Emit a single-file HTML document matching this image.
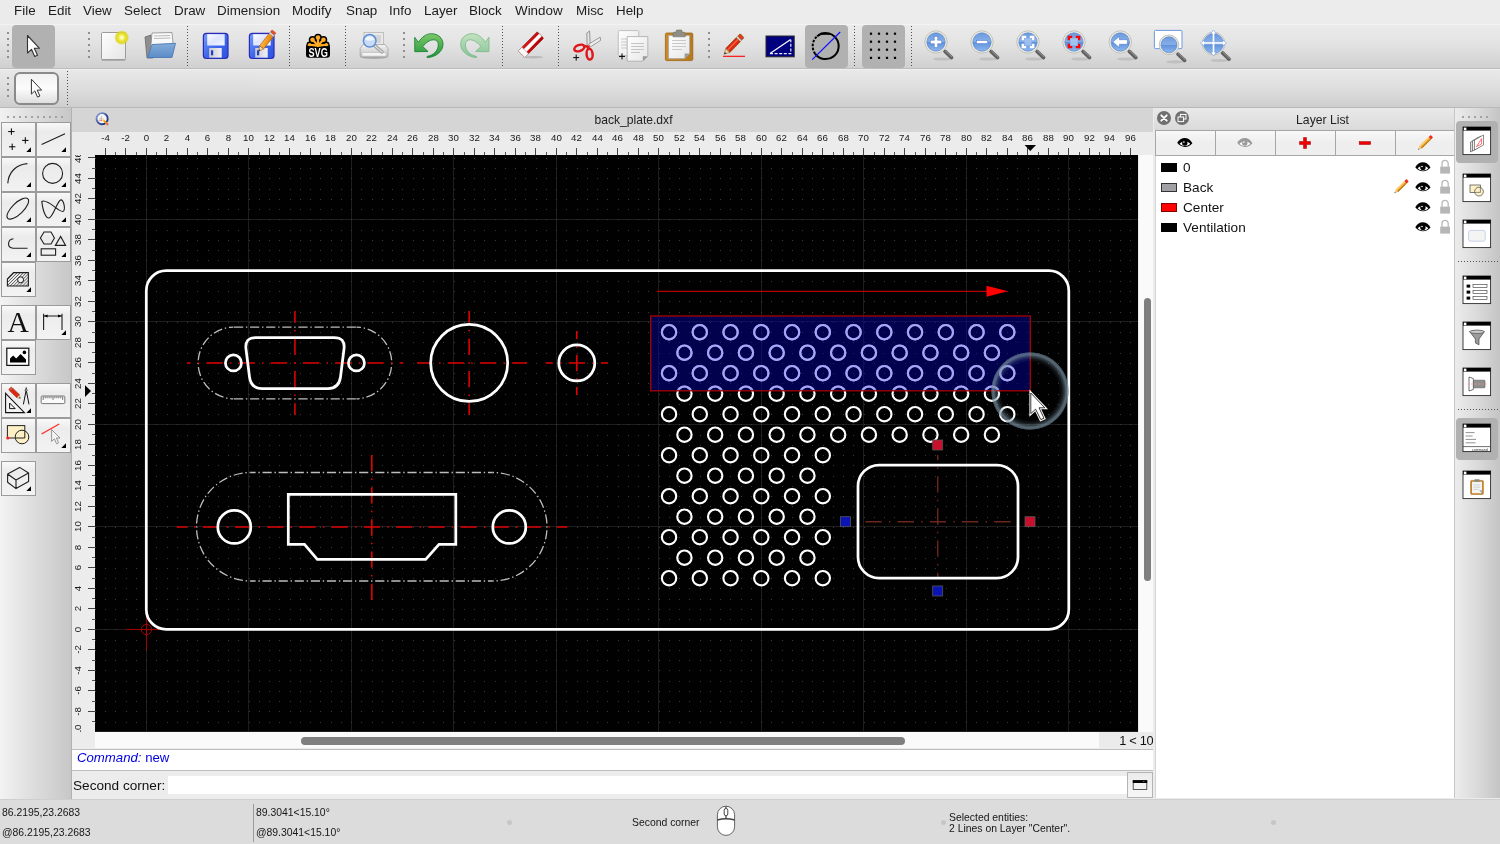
<!DOCTYPE html>
<html lang="en"><head><meta charset="utf-8"><title>back_plate.dxf - QCAD</title>
<style>
*{box-sizing:border-box;margin:0;padding:0}
html,body{width:1500px;height:844px;overflow:hidden;background:#dcdcdc}
body{font-family:"Liberation Sans",sans-serif;color:#1a1a1a}
#app{will-change:transform;opacity:0.9999;position:relative;width:1500px;height:844px;overflow:hidden;background:#ececec}
.abs{position:absolute}
#menubar{position:absolute;left:0;top:0;width:1500px;height:24px;background:#ececec}
.mi{position:absolute;top:3px;font-size:13.4px;line-height:16px;color:#1c1c1c;white-space:nowrap}
#tb1{position:absolute;left:0;top:24px;width:1500px;height:45px;background:linear-gradient(#f7f7f7 0,#ebebeb 1.5px,#e3e3e3 45%,#d0d0d0);border-bottom:1px solid #bdbdbd}
#tb2{position:absolute;left:0;top:69px;width:1500px;height:39px;background:linear-gradient(#f4f4f4 0,#e9e9e9 1.5px,#dedede 50%,#cecece);border-bottom:1px solid #b8b8b8}
.tbsel{position:absolute;background:#b1b1b1;border-radius:4px}
.vdots{position:absolute;width:1px;background:repeating-linear-gradient(180deg,#505050 0,#505050 1px,transparent 1px,transparent 3px)}
.grip{position:absolute;width:2px;background:repeating-linear-gradient(180deg,#8f8f8f 0,#8f8f8f 2px,transparent 2px,transparent 6px)}
.ico{position:absolute;width:36px;height:36px}
.ico svg{display:block}
#leftpanel{position:absolute;left:0;top:108px;width:71.5px;height:691px;background:linear-gradient(90deg,#f3f3f3,#dedede 45%,#c7c7c7);border-right:1.5px solid #b2b2b2}
.lt{position:absolute;width:35px;height:35px;background:linear-gradient(#f9f9f9,#ececec 28%,#f0f0f0 70%,#f3f3f3);border:1px solid #9b9b9b}
.lt svg{position:absolute;left:0;top:0}
#tabbar{position:absolute;left:72px;top:108px;width:1082px;height:24px;background:#d5d5d5}
#tabtitle{position:absolute;left:0;width:1123px;top:5px;text-align:center;font-size:12.1px;line-height:15px;color:#222}
#hruler{position:absolute;left:72px;top:132px;width:1081px;height:23px;background:#ececec}
#vruler{position:absolute;left:72px;top:155px;width:23px;height:593px;background:#ececec}
#canvasbg{position:absolute;left:95px;top:155px;width:1043px;height:577px;background:#000}
#cad{position:absolute;left:0;top:0;pointer-events:none}
#hscroll{position:absolute;left:95px;top:732px;width:1004px;height:16px;background:#fafafa}
#hthumb{position:absolute;left:301px;top:737.2px;width:604px;height:7.6px;border-radius:4px;background:#7f7f7f}
#vscroll{position:absolute;left:1138px;top:155px;width:15px;height:577px;background:#fafafa;border-left:1px solid #e8e8e8}
#vthumb{position:absolute;left:1144px;top:298px;width:7px;height:283px;border-radius:4px;background:#7f7f7f}
#zoomlbl{position:absolute;left:1099px;top:732px;width:54.4px;height:16px;background:#ebebeb;font-size:12.8px;letter-spacing:-0.3px;line-height:18px;text-align:right;color:#111;white-space:nowrap;overflow:hidden}
#cmdhist{position:absolute;left:72px;top:749px;width:1081px;height:22px;background:#fff;border-top:1px solid #bdbdbd;border-bottom:1px solid #bdbdbd}
#cmdhist span{position:absolute;left:5px;top:0;font-size:13.2px;line-height:16px;color:#0000e0}
#cmdrow{position:absolute;left:72px;top:771px;width:1081px;height:27.5px;background:#ececec}
#cmdlabel{position:absolute;left:1px;top:7px;font-size:13.6px;line-height:16px;color:#111}
#cmdinput{position:absolute;left:96px;top:5px;width:958.5px;height:18.4px;background:#fff}
#cmdbtn{position:absolute;left:1055px;top:1px;width:26px;height:26px;background:linear-gradient(#ececec,#f6f6f6);border:1px solid #b4b4b4}
#statusbar{position:absolute;left:0;top:798.5px;width:1500px;height:45.5px;background:#dcdcdc;border-top:1px solid #cfcfcf}
.st{position:absolute;font-size:10.4px;line-height:12px;color:#161616;white-space:nowrap;margin-top:-0.5px}
.sdot{position:absolute;width:5px;height:5px;border-radius:3px;background:#c6c6c6}
#rightdock{position:absolute;left:1153px;top:108px;width:301px;height:690px;background:#ececec}
#lltitle{position:absolute;left:1154px;top:108px;width:301px;height:22px;background:linear-gradient(#e9e9e9,#dadada)}
#lltitle span{position:absolute;left:0;width:337px;top:3.5px;text-align:center;font-size:12.2px;line-height:16px;color:#222}
.llbtn{position:absolute;top:130px;height:26px;width:61px;background:linear-gradient(#f8f8f8,#eeeeee 50%,#efefef);border:1px solid #a6a6a6}
#llbody{position:absolute;left:1155px;top:156px;width:300px;height:642px;background:#fff;border-left:1px solid #d4d4d4}
.lrow{position:absolute;left:0;width:296px;height:20px}
.lsw{position:absolute;left:5px;top:7px;width:16px;height:9px}
.lname{position:absolute;left:27px;top:2.8px;font-size:13.6px;line-height:18px;color:#111}
#rtool{position:absolute;left:1454px;top:108px;width:46px;height:690px;background:linear-gradient(90deg,#ececec,#dadada 50%,#c4c4c4);border-left:1px solid #c6c6c6}
.rsel{position:absolute;width:42.2px;height:42.5px;background:#b1b1b1;border-radius:4px}
.grip-h{position:absolute;height:2px;background:repeating-linear-gradient(90deg,#a2a2a2 0,#a2a2a2 2px,transparent 2px,transparent 6px)}
.wico{position:absolute;left:9.5px;width:28px;height:28px;background:#fff;border:1px solid #333}
.wico:before{content:"";position:absolute;left:0;top:0;width:26px;height:3.5px;background:#000}
.wico:after{content:"";position:absolute;left:0.5px;top:0.3px;width:3px;height:3px;background:#fff}
.hdots{position:absolute;height:1px;background:repeating-linear-gradient(90deg,#505050 0,#505050 1px,transparent 1px,transparent 3px)}
.ov{position:absolute;left:0;top:0;pointer-events:none;z-index:5}

</style></head>
<body>
<div id="app">
<div id="menubar"><span class="mi" style="left:14px">File</span><span class="mi" style="left:48px">Edit</span><span class="mi" style="left:83px">View</span><span class="mi" style="left:124px">Select</span><span class="mi" style="left:174px">Draw</span><span class="mi" style="left:217px">Dimension</span><span class="mi" style="left:292px">Modify</span><span class="mi" style="left:346px">Snap</span><span class="mi" style="left:389px">Info</span><span class="mi" style="left:424px">Layer</span><span class="mi" style="left:469px">Block</span><span class="mi" style="left:515px">Window</span><span class="mi" style="left:576px">Misc</span><span class="mi" style="left:616px">Help</span></div>
<div id="tb1">
<div class="grip" style="left:7px;top:8px;height:26px"></div>
<div class="tbsel" style="left:12px;top:1px;width:43px;height:43px"></div>
<div class="grip" style="left:88px;top:8px;height:26px"></div>
<div class="vdots" style="left:187px;top:2px;height:40px"></div>
<div class="vdots" style="left:289px;top:2px;height:40px"></div>
<div class="vdots" style="left:345px;top:2px;height:40px"></div>
<div class="grip" style="left:403px;top:8px;height:26px"></div>
<div class="vdots" style="left:502px;top:2px;height:40px"></div>
<div class="vdots" style="left:558px;top:2px;height:40px"></div>
<div class="grip" style="left:708px;top:8px;height:26px"></div>
<div class="tbsel" style="left:805px;top:1px;width:43px;height:43px"></div>
<div class="vdots" style="left:854px;top:2px;height:40px"></div>
<div class="tbsel" style="left:862px;top:1px;width:43px;height:43px"></div>
<div class="vdots" style="left:911px;top:2px;height:40px"></div>
</div>
<div id="tb2">
<div class="grip" style="left:7px;top:8px;height:22px"></div>
<div class="abs" style="left:14px;top:3px;width:45px;height:33.4px;border:2px solid #8a8a8a;border-radius:6px;background:linear-gradient(#f2f2f2,#fdfdfd 50%,#e0e0e0)"></div>
<div class="vdots" style="left:67px;top:2px;height:34px"></div>
</div>
<div id="leftpanel"></div>
<div class="grip-h" style="left:7px;top:116px;width:56px"></div>
<div class="lt" style="left:1px;top:122.0px"></div>
<div class="lt" style="left:36px;top:122.0px"></div>
<div class="lt" style="left:1px;top:157.0px"></div>
<div class="lt" style="left:36px;top:157.0px"></div>
<div class="lt" style="left:1px;top:192.0px"></div>
<div class="lt" style="left:36px;top:192.0px"></div>
<div class="lt" style="left:1px;top:227.0px"></div>
<div class="lt" style="left:36px;top:227.0px"></div>
<div class="lt" style="left:1px;top:262.0px"></div>
<div class="lt" style="left:1px;top:305.0px"></div>
<div class="lt" style="left:36px;top:305.0px"></div>
<div class="lt" style="left:1px;top:340.0px"></div>
<div class="lt" style="left:1px;top:383.0px"></div>
<div class="lt" style="left:36px;top:383.0px"></div>
<div class="lt" style="left:1px;top:418.0px"></div>
<div class="lt" style="left:36px;top:418.0px"></div>
<div class="lt" style="left:1px;top:461.0px"></div>
<div id="tabbar"><span id="tabtitle">back_plate.dxf</span></div>
<div id="hruler"></div><div id="vruler"></div><div id="canvasbg"></div>
<svg id="cad" width="1500" height="844" viewBox="0 0 1500 844">
<defs><clipPath id="cv"><rect x="95" y="155" width="1043" height="577"/></clipPath><pattern id="dots" x="145.8" y="628.95" width="10.25" height="10.25" patternUnits="userSpaceOnUse"><rect x="0" y="0" width="1" height="1" fill="#4a4a4a"/></pattern></defs>
<g font-family="'Liberation Sans',sans-serif" font-size="9.7" fill="#1a1a1a" text-anchor="middle">
<line x1="105.5" y1="148" x2="105.5" y2="155" stroke="#444" stroke-width="1"/>
<text x="105.5" y="141">-4</text>
<line x1="115.5" y1="152" x2="115.5" y2="155" stroke="#555" stroke-width="1"/>
<line x1="125.5" y1="148" x2="125.5" y2="155" stroke="#444" stroke-width="1"/>
<text x="125.5" y="141">-2</text>
<line x1="136.5" y1="152" x2="136.5" y2="155" stroke="#555" stroke-width="1"/>
<line x1="146.5" y1="148" x2="146.5" y2="155" stroke="#444" stroke-width="1"/>
<text x="146.5" y="141">0</text>
<line x1="156.5" y1="152" x2="156.5" y2="155" stroke="#555" stroke-width="1"/>
<line x1="166.5" y1="148" x2="166.5" y2="155" stroke="#444" stroke-width="1"/>
<text x="166.5" y="141">2</text>
<line x1="177.5" y1="152" x2="177.5" y2="155" stroke="#555" stroke-width="1"/>
<line x1="187.5" y1="148" x2="187.5" y2="155" stroke="#444" stroke-width="1"/>
<text x="187.5" y="141">4</text>
<line x1="197.5" y1="152" x2="197.5" y2="155" stroke="#555" stroke-width="1"/>
<line x1="207.5" y1="148" x2="207.5" y2="155" stroke="#444" stroke-width="1"/>
<text x="207.5" y="141">6</text>
<line x1="218.5" y1="152" x2="218.5" y2="155" stroke="#555" stroke-width="1"/>
<line x1="228.5" y1="148" x2="228.5" y2="155" stroke="#444" stroke-width="1"/>
<text x="228.5" y="141">8</text>
<line x1="238.5" y1="152" x2="238.5" y2="155" stroke="#555" stroke-width="1"/>
<line x1="248.5" y1="148" x2="248.5" y2="155" stroke="#444" stroke-width="1"/>
<text x="248.5" y="141">10</text>
<line x1="259.5" y1="152" x2="259.5" y2="155" stroke="#555" stroke-width="1"/>
<line x1="269.5" y1="148" x2="269.5" y2="155" stroke="#444" stroke-width="1"/>
<text x="269.5" y="141">12</text>
<line x1="279.5" y1="152" x2="279.5" y2="155" stroke="#555" stroke-width="1"/>
<line x1="289.5" y1="148" x2="289.5" y2="155" stroke="#444" stroke-width="1"/>
<text x="289.5" y="141">14</text>
<line x1="300.5" y1="152" x2="300.5" y2="155" stroke="#555" stroke-width="1"/>
<line x1="310.5" y1="148" x2="310.5" y2="155" stroke="#444" stroke-width="1"/>
<text x="310.5" y="141">16</text>
<line x1="320.5" y1="152" x2="320.5" y2="155" stroke="#555" stroke-width="1"/>
<line x1="330.5" y1="148" x2="330.5" y2="155" stroke="#444" stroke-width="1"/>
<text x="330.5" y="141">18</text>
<line x1="341.5" y1="152" x2="341.5" y2="155" stroke="#555" stroke-width="1"/>
<line x1="351.5" y1="148" x2="351.5" y2="155" stroke="#444" stroke-width="1"/>
<text x="351.5" y="141">20</text>
<line x1="361.5" y1="152" x2="361.5" y2="155" stroke="#555" stroke-width="1"/>
<line x1="371.5" y1="148" x2="371.5" y2="155" stroke="#444" stroke-width="1"/>
<text x="371.5" y="141">22</text>
<line x1="382.5" y1="152" x2="382.5" y2="155" stroke="#555" stroke-width="1"/>
<line x1="392.5" y1="148" x2="392.5" y2="155" stroke="#444" stroke-width="1"/>
<text x="392.5" y="141">24</text>
<line x1="402.5" y1="152" x2="402.5" y2="155" stroke="#555" stroke-width="1"/>
<line x1="412.5" y1="148" x2="412.5" y2="155" stroke="#444" stroke-width="1"/>
<text x="412.5" y="141">26</text>
<line x1="423.5" y1="152" x2="423.5" y2="155" stroke="#555" stroke-width="1"/>
<line x1="433.5" y1="148" x2="433.5" y2="155" stroke="#444" stroke-width="1"/>
<text x="433.5" y="141">28</text>
<line x1="443.5" y1="152" x2="443.5" y2="155" stroke="#555" stroke-width="1"/>
<line x1="453.5" y1="148" x2="453.5" y2="155" stroke="#444" stroke-width="1"/>
<text x="453.5" y="141">30</text>
<line x1="464.5" y1="152" x2="464.5" y2="155" stroke="#555" stroke-width="1"/>
<line x1="474.5" y1="148" x2="474.5" y2="155" stroke="#444" stroke-width="1"/>
<text x="474.5" y="141">32</text>
<line x1="484.5" y1="152" x2="484.5" y2="155" stroke="#555" stroke-width="1"/>
<line x1="494.5" y1="148" x2="494.5" y2="155" stroke="#444" stroke-width="1"/>
<text x="494.5" y="141">34</text>
<line x1="505.5" y1="152" x2="505.5" y2="155" stroke="#555" stroke-width="1"/>
<line x1="515.5" y1="148" x2="515.5" y2="155" stroke="#444" stroke-width="1"/>
<text x="515.5" y="141">36</text>
<line x1="525.5" y1="152" x2="525.5" y2="155" stroke="#555" stroke-width="1"/>
<line x1="535.5" y1="148" x2="535.5" y2="155" stroke="#444" stroke-width="1"/>
<text x="535.5" y="141">38</text>
<line x1="546.5" y1="152" x2="546.5" y2="155" stroke="#555" stroke-width="1"/>
<line x1="556.5" y1="148" x2="556.5" y2="155" stroke="#444" stroke-width="1"/>
<text x="556.5" y="141">40</text>
<line x1="566.5" y1="152" x2="566.5" y2="155" stroke="#555" stroke-width="1"/>
<line x1="576.5" y1="148" x2="576.5" y2="155" stroke="#444" stroke-width="1"/>
<text x="576.5" y="141">42</text>
<line x1="587.5" y1="152" x2="587.5" y2="155" stroke="#555" stroke-width="1"/>
<line x1="597.5" y1="148" x2="597.5" y2="155" stroke="#444" stroke-width="1"/>
<text x="597.5" y="141">44</text>
<line x1="607.5" y1="152" x2="607.5" y2="155" stroke="#555" stroke-width="1"/>
<line x1="617.5" y1="148" x2="617.5" y2="155" stroke="#444" stroke-width="1"/>
<text x="617.5" y="141">46</text>
<line x1="628.5" y1="152" x2="628.5" y2="155" stroke="#555" stroke-width="1"/>
<line x1="638.5" y1="148" x2="638.5" y2="155" stroke="#444" stroke-width="1"/>
<text x="638.5" y="141">48</text>
<line x1="648.5" y1="152" x2="648.5" y2="155" stroke="#555" stroke-width="1"/>
<line x1="658.5" y1="148" x2="658.5" y2="155" stroke="#444" stroke-width="1"/>
<text x="658.5" y="141">50</text>
<line x1="669.5" y1="152" x2="669.5" y2="155" stroke="#555" stroke-width="1"/>
<line x1="679.5" y1="148" x2="679.5" y2="155" stroke="#444" stroke-width="1"/>
<text x="679.5" y="141">52</text>
<line x1="689.5" y1="152" x2="689.5" y2="155" stroke="#555" stroke-width="1"/>
<line x1="699.5" y1="148" x2="699.5" y2="155" stroke="#444" stroke-width="1"/>
<text x="699.5" y="141">54</text>
<line x1="710.5" y1="152" x2="710.5" y2="155" stroke="#555" stroke-width="1"/>
<line x1="720.5" y1="148" x2="720.5" y2="155" stroke="#444" stroke-width="1"/>
<text x="720.5" y="141">56</text>
<line x1="730.5" y1="152" x2="730.5" y2="155" stroke="#555" stroke-width="1"/>
<line x1="740.5" y1="148" x2="740.5" y2="155" stroke="#444" stroke-width="1"/>
<text x="740.5" y="141">58</text>
<line x1="751.5" y1="152" x2="751.5" y2="155" stroke="#555" stroke-width="1"/>
<line x1="761.5" y1="148" x2="761.5" y2="155" stroke="#444" stroke-width="1"/>
<text x="761.5" y="141">60</text>
<line x1="771.5" y1="152" x2="771.5" y2="155" stroke="#555" stroke-width="1"/>
<line x1="781.5" y1="148" x2="781.5" y2="155" stroke="#444" stroke-width="1"/>
<text x="781.5" y="141">62</text>
<line x1="792.5" y1="152" x2="792.5" y2="155" stroke="#555" stroke-width="1"/>
<line x1="802.5" y1="148" x2="802.5" y2="155" stroke="#444" stroke-width="1"/>
<text x="802.5" y="141">64</text>
<line x1="812.5" y1="152" x2="812.5" y2="155" stroke="#555" stroke-width="1"/>
<line x1="822.5" y1="148" x2="822.5" y2="155" stroke="#444" stroke-width="1"/>
<text x="822.5" y="141">66</text>
<line x1="833.5" y1="152" x2="833.5" y2="155" stroke="#555" stroke-width="1"/>
<line x1="843.5" y1="148" x2="843.5" y2="155" stroke="#444" stroke-width="1"/>
<text x="843.5" y="141">68</text>
<line x1="853.5" y1="152" x2="853.5" y2="155" stroke="#555" stroke-width="1"/>
<line x1="863.5" y1="148" x2="863.5" y2="155" stroke="#444" stroke-width="1"/>
<text x="863.5" y="141">70</text>
<line x1="874.5" y1="152" x2="874.5" y2="155" stroke="#555" stroke-width="1"/>
<line x1="884.5" y1="148" x2="884.5" y2="155" stroke="#444" stroke-width="1"/>
<text x="884.5" y="141">72</text>
<line x1="894.5" y1="152" x2="894.5" y2="155" stroke="#555" stroke-width="1"/>
<line x1="904.5" y1="148" x2="904.5" y2="155" stroke="#444" stroke-width="1"/>
<text x="904.5" y="141">74</text>
<line x1="915.5" y1="152" x2="915.5" y2="155" stroke="#555" stroke-width="1"/>
<line x1="925.5" y1="148" x2="925.5" y2="155" stroke="#444" stroke-width="1"/>
<text x="925.5" y="141">76</text>
<line x1="935.5" y1="152" x2="935.5" y2="155" stroke="#555" stroke-width="1"/>
<line x1="945.5" y1="148" x2="945.5" y2="155" stroke="#444" stroke-width="1"/>
<text x="945.5" y="141">78</text>
<line x1="956.5" y1="152" x2="956.5" y2="155" stroke="#555" stroke-width="1"/>
<line x1="966.5" y1="148" x2="966.5" y2="155" stroke="#444" stroke-width="1"/>
<text x="966.5" y="141">80</text>
<line x1="976.5" y1="152" x2="976.5" y2="155" stroke="#555" stroke-width="1"/>
<line x1="986.5" y1="148" x2="986.5" y2="155" stroke="#444" stroke-width="1"/>
<text x="986.5" y="141">82</text>
<line x1="997.5" y1="152" x2="997.5" y2="155" stroke="#555" stroke-width="1"/>
<line x1="1007.5" y1="148" x2="1007.5" y2="155" stroke="#444" stroke-width="1"/>
<text x="1007.5" y="141">84</text>
<line x1="1017.5" y1="152" x2="1017.5" y2="155" stroke="#555" stroke-width="1"/>
<line x1="1027.5" y1="148" x2="1027.5" y2="155" stroke="#444" stroke-width="1"/>
<text x="1027.5" y="141">86</text>
<line x1="1038.5" y1="152" x2="1038.5" y2="155" stroke="#555" stroke-width="1"/>
<line x1="1048.5" y1="148" x2="1048.5" y2="155" stroke="#444" stroke-width="1"/>
<text x="1048.5" y="141">88</text>
<line x1="1058.5" y1="152" x2="1058.5" y2="155" stroke="#555" stroke-width="1"/>
<line x1="1068.5" y1="148" x2="1068.5" y2="155" stroke="#444" stroke-width="1"/>
<text x="1068.5" y="141">90</text>
<line x1="1079.5" y1="152" x2="1079.5" y2="155" stroke="#555" stroke-width="1"/>
<line x1="1089.5" y1="148" x2="1089.5" y2="155" stroke="#444" stroke-width="1"/>
<text x="1089.5" y="141">92</text>
<line x1="1099.5" y1="152" x2="1099.5" y2="155" stroke="#555" stroke-width="1"/>
<line x1="1109.5" y1="148" x2="1109.5" y2="155" stroke="#444" stroke-width="1"/>
<text x="1109.5" y="141">94</text>
<line x1="1120.5" y1="152" x2="1120.5" y2="155" stroke="#555" stroke-width="1"/>
<line x1="1130.5" y1="148" x2="1130.5" y2="155" stroke="#444" stroke-width="1"/>
<text x="1130.5" y="141">96</text>
</g>
<g font-family="'Liberation Sans',sans-serif" font-size="9.7" fill="#1a1a1a" text-anchor="middle"><g clip-path="url(#vr)">
<text transform="translate(81.3,731.5) rotate(-90)">-10</text>
<line x1="92" y1="721.5" x2="95" y2="721.5" stroke="#555" stroke-width="1"/>
<line x1="88" y1="711.5" x2="95" y2="711.5" stroke="#444" stroke-width="1"/>
<text transform="translate(81.3,711.5) rotate(-90)">-8</text>
<line x1="92" y1="701.5" x2="95" y2="701.5" stroke="#555" stroke-width="1"/>
<line x1="88" y1="690.5" x2="95" y2="690.5" stroke="#444" stroke-width="1"/>
<text transform="translate(81.3,690.5) rotate(-90)">-6</text>
<line x1="92" y1="680.5" x2="95" y2="680.5" stroke="#555" stroke-width="1"/>
<line x1="88" y1="670.5" x2="95" y2="670.5" stroke="#444" stroke-width="1"/>
<text transform="translate(81.3,670.5) rotate(-90)">-4</text>
<line x1="92" y1="660.5" x2="95" y2="660.5" stroke="#555" stroke-width="1"/>
<line x1="88" y1="649.5" x2="95" y2="649.5" stroke="#444" stroke-width="1"/>
<text transform="translate(81.3,649.5) rotate(-90)">-2</text>
<line x1="92" y1="639.5" x2="95" y2="639.5" stroke="#555" stroke-width="1"/>
<line x1="88" y1="629.5" x2="95" y2="629.5" stroke="#444" stroke-width="1"/>
<text transform="translate(81.3,629.5) rotate(-90)">0</text>
<line x1="92" y1="619.5" x2="95" y2="619.5" stroke="#555" stroke-width="1"/>
<line x1="88" y1="608.5" x2="95" y2="608.5" stroke="#444" stroke-width="1"/>
<text transform="translate(81.3,608.5) rotate(-90)">2</text>
<line x1="92" y1="598.5" x2="95" y2="598.5" stroke="#555" stroke-width="1"/>
<line x1="88" y1="588.5" x2="95" y2="588.5" stroke="#444" stroke-width="1"/>
<text transform="translate(81.3,588.5) rotate(-90)">4</text>
<line x1="92" y1="578.5" x2="95" y2="578.5" stroke="#555" stroke-width="1"/>
<line x1="88" y1="567.5" x2="95" y2="567.5" stroke="#444" stroke-width="1"/>
<text transform="translate(81.3,567.5) rotate(-90)">6</text>
<line x1="92" y1="557.5" x2="95" y2="557.5" stroke="#555" stroke-width="1"/>
<line x1="88" y1="547.5" x2="95" y2="547.5" stroke="#444" stroke-width="1"/>
<text transform="translate(81.3,547.5) rotate(-90)">8</text>
<line x1="92" y1="537.5" x2="95" y2="537.5" stroke="#555" stroke-width="1"/>
<line x1="88" y1="526.5" x2="95" y2="526.5" stroke="#444" stroke-width="1"/>
<text transform="translate(81.3,526.5) rotate(-90)">10</text>
<line x1="92" y1="516.5" x2="95" y2="516.5" stroke="#555" stroke-width="1"/>
<line x1="88" y1="506.5" x2="95" y2="506.5" stroke="#444" stroke-width="1"/>
<text transform="translate(81.3,506.5) rotate(-90)">12</text>
<line x1="92" y1="496.5" x2="95" y2="496.5" stroke="#555" stroke-width="1"/>
<line x1="88" y1="485.5" x2="95" y2="485.5" stroke="#444" stroke-width="1"/>
<text transform="translate(81.3,485.5) rotate(-90)">14</text>
<line x1="92" y1="475.5" x2="95" y2="475.5" stroke="#555" stroke-width="1"/>
<line x1="88" y1="465.5" x2="95" y2="465.5" stroke="#444" stroke-width="1"/>
<text transform="translate(81.3,465.5) rotate(-90)">16</text>
<line x1="92" y1="455.5" x2="95" y2="455.5" stroke="#555" stroke-width="1"/>
<line x1="88" y1="444.5" x2="95" y2="444.5" stroke="#444" stroke-width="1"/>
<text transform="translate(81.3,444.5) rotate(-90)">18</text>
<line x1="92" y1="434.5" x2="95" y2="434.5" stroke="#555" stroke-width="1"/>
<line x1="88" y1="424.5" x2="95" y2="424.5" stroke="#444" stroke-width="1"/>
<text transform="translate(81.3,424.5) rotate(-90)">20</text>
<line x1="92" y1="414.5" x2="95" y2="414.5" stroke="#555" stroke-width="1"/>
<line x1="88" y1="403.5" x2="95" y2="403.5" stroke="#444" stroke-width="1"/>
<text transform="translate(81.3,403.5) rotate(-90)">22</text>
<line x1="92" y1="393.5" x2="95" y2="393.5" stroke="#555" stroke-width="1"/>
<line x1="88" y1="383.5" x2="95" y2="383.5" stroke="#444" stroke-width="1"/>
<text transform="translate(81.3,383.5) rotate(-90)">24</text>
<line x1="92" y1="373.5" x2="95" y2="373.5" stroke="#555" stroke-width="1"/>
<line x1="88" y1="362.5" x2="95" y2="362.5" stroke="#444" stroke-width="1"/>
<text transform="translate(81.3,362.5) rotate(-90)">26</text>
<line x1="92" y1="352.5" x2="95" y2="352.5" stroke="#555" stroke-width="1"/>
<line x1="88" y1="342.5" x2="95" y2="342.5" stroke="#444" stroke-width="1"/>
<text transform="translate(81.3,342.5) rotate(-90)">28</text>
<line x1="92" y1="332.5" x2="95" y2="332.5" stroke="#555" stroke-width="1"/>
<line x1="88" y1="321.5" x2="95" y2="321.5" stroke="#444" stroke-width="1"/>
<text transform="translate(81.3,321.5) rotate(-90)">30</text>
<line x1="92" y1="311.5" x2="95" y2="311.5" stroke="#555" stroke-width="1"/>
<line x1="88" y1="301.5" x2="95" y2="301.5" stroke="#444" stroke-width="1"/>
<text transform="translate(81.3,301.5) rotate(-90)">32</text>
<line x1="92" y1="291.5" x2="95" y2="291.5" stroke="#555" stroke-width="1"/>
<line x1="88" y1="280.5" x2="95" y2="280.5" stroke="#444" stroke-width="1"/>
<text transform="translate(81.3,280.5) rotate(-90)">34</text>
<line x1="92" y1="270.5" x2="95" y2="270.5" stroke="#555" stroke-width="1"/>
<line x1="88" y1="260.5" x2="95" y2="260.5" stroke="#444" stroke-width="1"/>
<text transform="translate(81.3,260.5) rotate(-90)">36</text>
<line x1="92" y1="250.5" x2="95" y2="250.5" stroke="#555" stroke-width="1"/>
<line x1="88" y1="239.5" x2="95" y2="239.5" stroke="#444" stroke-width="1"/>
<text transform="translate(81.3,239.5) rotate(-90)">38</text>
<line x1="92" y1="229.5" x2="95" y2="229.5" stroke="#555" stroke-width="1"/>
<line x1="88" y1="219.5" x2="95" y2="219.5" stroke="#444" stroke-width="1"/>
<text transform="translate(81.3,219.5) rotate(-90)">40</text>
<line x1="92" y1="209.5" x2="95" y2="209.5" stroke="#555" stroke-width="1"/>
<line x1="88" y1="198.5" x2="95" y2="198.5" stroke="#444" stroke-width="1"/>
<text transform="translate(81.3,198.5) rotate(-90)">42</text>
<line x1="92" y1="188.5" x2="95" y2="188.5" stroke="#555" stroke-width="1"/>
<line x1="88" y1="178.5" x2="95" y2="178.5" stroke="#444" stroke-width="1"/>
<text transform="translate(81.3,178.5) rotate(-90)">44</text>
<line x1="92" y1="168.5" x2="95" y2="168.5" stroke="#555" stroke-width="1"/>
<line x1="88" y1="157.5" x2="95" y2="157.5" stroke="#444" stroke-width="1"/>
<text transform="translate(81.3,157.5) rotate(-90)">46</text>
</g></g>
<defs><clipPath id="vr"><rect x="72" y="155" width="23" height="577"/></clipPath></defs>
<path d="M1024.6 145.1 L1036 145.1 L1030.3 150.9 Z" fill="#000"/>
<path d="M85 385.2 L85 397 L91 391.1 Z" fill="#000"/>
<g clip-path="url(#cv)">
<line x1="146.5" y1="155" x2="146.5" y2="732" stroke="#1e1e1e" stroke-width="1"/>
<line x1="248.5" y1="155" x2="248.5" y2="732" stroke="#1e1e1e" stroke-width="1"/>
<line x1="351.5" y1="155" x2="351.5" y2="732" stroke="#1e1e1e" stroke-width="1"/>
<line x1="453.5" y1="155" x2="453.5" y2="732" stroke="#1e1e1e" stroke-width="1"/>
<line x1="556.5" y1="155" x2="556.5" y2="732" stroke="#1e1e1e" stroke-width="1"/>
<line x1="658.5" y1="155" x2="658.5" y2="732" stroke="#1e1e1e" stroke-width="1"/>
<line x1="761.5" y1="155" x2="761.5" y2="732" stroke="#1e1e1e" stroke-width="1"/>
<line x1="863.5" y1="155" x2="863.5" y2="732" stroke="#1e1e1e" stroke-width="1"/>
<line x1="966.5" y1="155" x2="966.5" y2="732" stroke="#1e1e1e" stroke-width="1"/>
<line x1="1068.5" y1="155" x2="1068.5" y2="732" stroke="#1e1e1e" stroke-width="1"/>
<line x1="95" y1="731.5" x2="1138" y2="731.5" stroke="#1e1e1e" stroke-width="1"/>
<line x1="95" y1="629.5" x2="1138" y2="629.5" stroke="#1e1e1e" stroke-width="1"/>
<line x1="95" y1="526.5" x2="1138" y2="526.5" stroke="#1e1e1e" stroke-width="1"/>
<line x1="95" y1="424.5" x2="1138" y2="424.5" stroke="#1e1e1e" stroke-width="1"/>
<line x1="95" y1="321.5" x2="1138" y2="321.5" stroke="#1e1e1e" stroke-width="1"/>
<line x1="95" y1="219.5" x2="1138" y2="219.5" stroke="#1e1e1e" stroke-width="1"/>
<defs><path id="dr" d="M95 0h1M105 0h1M115 0h1M126 0h1M136 0h1M146 0h1M156 0h1M167 0h1M177 0h1M187 0h1M197 0h1M208 0h1M218 0h1M228 0h1M238 0h1M249 0h1M259 0h1M269 0h1M279 0h1M290 0h1M300 0h1M310 0h1M320 0h1M331 0h1M341 0h1M351 0h1M361 0h1M372 0h1M382 0h1M392 0h1M402 0h1M413 0h1M423 0h1M433 0h1M443 0h1M454 0h1M464 0h1M474 0h1M484 0h1M495 0h1M505 0h1M515 0h1M525 0h1M536 0h1M546 0h1M556 0h1M566 0h1M577 0h1M587 0h1M597 0h1M607 0h1M618 0h1M628 0h1M638 0h1M648 0h1M659 0h1M669 0h1M679 0h1M689 0h1M700 0h1M710 0h1M720 0h1M730 0h1M741 0h1M751 0h1M761 0h1M771 0h1M782 0h1M792 0h1M802 0h1M812 0h1M823 0h1M833 0h1M843 0h1M853 0h1M864 0h1M874 0h1M884 0h1M894 0h1M905 0h1M915 0h1M925 0h1M935 0h1M946 0h1M956 0h1M966 0h1M976 0h1M987 0h1M997 0h1M1007 0h1M1017 0h1M1028 0h1M1038 0h1M1048 0h1M1058 0h1M1069 0h1M1079 0h1M1089 0h1M1099 0h1M1110 0h1M1120 0h1M1130 0h1" stroke="#3a3a3a" stroke-width="1" fill="none"/></defs>
<use href="#dr" y="722.5"/>
<use href="#dr" y="711.5"/>
<use href="#dr" y="701.5"/>
<use href="#dr" y="691.5"/>
<use href="#dr" y="681.5"/>
<use href="#dr" y="670.5"/>
<use href="#dr" y="660.5"/>
<use href="#dr" y="650.5"/>
<use href="#dr" y="640.5"/>
<use href="#dr" y="629.5"/>
<use href="#dr" y="619.5"/>
<use href="#dr" y="609.5"/>
<use href="#dr" y="599.5"/>
<use href="#dr" y="588.5"/>
<use href="#dr" y="578.5"/>
<use href="#dr" y="568.5"/>
<use href="#dr" y="558.5"/>
<use href="#dr" y="547.5"/>
<use href="#dr" y="537.5"/>
<use href="#dr" y="527.5"/>
<use href="#dr" y="517.5"/>
<use href="#dr" y="506.5"/>
<use href="#dr" y="496.5"/>
<use href="#dr" y="486.5"/>
<use href="#dr" y="476.5"/>
<use href="#dr" y="465.5"/>
<use href="#dr" y="455.5"/>
<use href="#dr" y="445.5"/>
<use href="#dr" y="435.5"/>
<use href="#dr" y="424.5"/>
<use href="#dr" y="414.5"/>
<use href="#dr" y="404.5"/>
<use href="#dr" y="394.5"/>
<use href="#dr" y="383.5"/>
<use href="#dr" y="373.5"/>
<use href="#dr" y="363.5"/>
<use href="#dr" y="353.5"/>
<use href="#dr" y="342.5"/>
<use href="#dr" y="332.5"/>
<use href="#dr" y="322.5"/>
<use href="#dr" y="312.5"/>
<use href="#dr" y="301.5"/>
<use href="#dr" y="291.5"/>
<use href="#dr" y="281.5"/>
<use href="#dr" y="271.5"/>
<use href="#dr" y="260.5"/>
<use href="#dr" y="250.5"/>
<use href="#dr" y="240.5"/>
<use href="#dr" y="230.5"/>
<use href="#dr" y="219.5"/>
<use href="#dr" y="209.5"/>
<use href="#dr" y="199.5"/>
<use href="#dr" y="189.5"/>
<use href="#dr" y="178.5"/>
<use href="#dr" y="168.5"/>
<use href="#dr" y="158.5"/>
<g stroke="#a40000" stroke-width="1" fill="none"><line x1="126" y1="629.5" x2="167" y2="629.5"/><line x1="146.5" y1="609" x2="146.5" y2="650"/><circle cx="146.5" cy="629.5" r="5.1"/></g>
<rect x="146.3" y="270.7" width="922.5" height="358.75" rx="20" ry="20" stroke="#fff" stroke-width="2.75" fill="none"/>
<path d="M233.43 327.08 H356.43" stroke="#bdbdbd" stroke-width="1.3" fill="none" stroke-dasharray="9.2 2.75 1.4 2.75" stroke-dashoffset="15.55"/><path d="M233.43 398.83 H356.43" stroke="#bdbdbd" stroke-width="1.3" fill="none" stroke-dasharray="9.2 2.75 1.4 2.75" stroke-dashoffset="15.55"/><path d="M233.43 327.08 A35.88 35.88 0 0 0 233.43 398.83" stroke="#bdbdbd" stroke-width="1.3" fill="none" stroke-dasharray="9.2 2.75 1.4 2.75" stroke-dashoffset="4.6"/><path d="M356.43 327.08 A35.88 35.88 0 0 1 356.43 398.83" stroke="#bdbdbd" stroke-width="1.3" fill="none" stroke-dasharray="9.2 2.75 1.4 2.75" stroke-dashoffset="4.6"/>
<line x1="186.9" y1="362.95" x2="403.2" y2="362.95" stroke="#e00000" stroke-width="1.6" stroke-dasharray="16.3 7.2 1.5 7.2" stroke-dashoffset="12.7"/>
<line x1="294.93" y1="311" x2="294.93" y2="415" stroke="#e00000" stroke-width="1.6" stroke-dasharray="16.3 7.2 1.5 7.2" stroke-dashoffset="4.45"/>
<circle cx="233.43" cy="362.95" r="8" stroke="#fff" stroke-width="2.75" fill="none"/>
<circle cx="356.43" cy="362.95" r="8" stroke="#fff" stroke-width="2.75" fill="none"/>
<path d="M256 337.5 L334 337.5 Q345.5 337.5 344 349 L340.5 377 Q339 388.5 328 388.5 L262 388.5 Q251 388.5 249.5 377 L246 349 Q244.5 337.5 256 337.5 Z" stroke="#fff" stroke-width="2.75" fill="none"/>
<line x1="417" y1="362.95" x2="527" y2="362.95" stroke="#e00000" stroke-width="1.6" stroke-dasharray="16.3 7.2 1.5 7.2" stroke-dashoffset="1.45"/>
<line x1="469.18" y1="311" x2="469.18" y2="415" stroke="#e00000" stroke-width="1.6" stroke-dasharray="16.3 7.2 1.5 7.2" stroke-dashoffset="4.45"/>
<circle cx="469.18" cy="362.95" r="38.5" stroke="#fff" stroke-width="2.75" fill="none"/>
<line x1="545.6" y1="362.95" x2="608" y2="362.95" stroke="#e00000" stroke-width="1.6" stroke-dasharray="16.3 7.2 1.5 7.2" stroke-dashoffset="9.15"/>
<line x1="576.8" y1="331" x2="576.8" y2="395" stroke="#e00000" stroke-width="1.6" stroke-dasharray="16.3 7.2 1.5 7.2" stroke-dashoffset="8.35"/>
<circle cx="576.8" cy="362.95" r="18" stroke="#fff" stroke-width="2.75" fill="none"/>
<path d="M250.75 472.5 H492.75" stroke="#bdbdbd" stroke-width="1.3" fill="none" stroke-dasharray="9.2 2.75 1.4 2.75" stroke-dashoffset="4.35"/><path d="M250.75 581 H492.75" stroke="#bdbdbd" stroke-width="1.3" fill="none" stroke-dasharray="9.2 2.75 1.4 2.75" stroke-dashoffset="4.35"/><path d="M250.75 472.5 A54.25 54.25 0 0 0 250.75 581" stroke="#bdbdbd" stroke-width="1.3" fill="none" stroke-dasharray="9.2 2.75 1.4 2.75" stroke-dashoffset="7.93"/><path d="M492.75 472.5 A54.25 54.25 0 0 1 492.75 581" stroke="#bdbdbd" stroke-width="1.3" fill="none" stroke-dasharray="9.2 2.75 1.4 2.75" stroke-dashoffset="7.93"/>
<line x1="176.7" y1="526.95" x2="567.3" y2="526.95" stroke="#e00000" stroke-width="1.6" stroke-dasharray="16.3 7.2 1.5 7.2" stroke-dashoffset="6.05"/>
<line x1="371.8" y1="455" x2="371.8" y2="600" stroke="#e00000" stroke-width="1.6" stroke-dasharray="16.3 7.2 1.5 7.2" stroke-dashoffset="0.05"/>
<circle cx="234.3" cy="526.95" r="16.5" stroke="#fff" stroke-width="2.75" fill="none"/>
<circle cx="509.3" cy="526.95" r="16.5" stroke="#fff" stroke-width="2.75" fill="none"/>
<path d="M288.3 494.3 L455.8 494.3 L455.8 544.3 L439 544.3 L425.7 559.3 L317.3 559.3 L304.5 544.3 L288.3 544.3 Z" stroke="#fff" stroke-width="2.75" fill="none" stroke-linejoin="miter"/>
<g stroke="#fff" stroke-width="2.15" fill="none"><circle cx="669.05" cy="332.2" r="7.17"/><circle cx="699.8" cy="332.2" r="7.17"/><circle cx="730.55" cy="332.2" r="7.17"/><circle cx="761.3" cy="332.2" r="7.17"/><circle cx="792.05" cy="332.2" r="7.17"/><circle cx="822.8" cy="332.2" r="7.17"/><circle cx="853.55" cy="332.2" r="7.17"/><circle cx="884.3" cy="332.2" r="7.17"/><circle cx="915.05" cy="332.2" r="7.17"/><circle cx="945.8" cy="332.2" r="7.17"/><circle cx="976.55" cy="332.2" r="7.17"/><circle cx="1007.3" cy="332.2" r="7.17"/><circle cx="684.42" cy="352.7" r="7.17"/><circle cx="715.17" cy="352.7" r="7.17"/><circle cx="745.92" cy="352.7" r="7.17"/><circle cx="776.67" cy="352.7" r="7.17"/><circle cx="807.42" cy="352.7" r="7.17"/><circle cx="838.17" cy="352.7" r="7.17"/><circle cx="868.92" cy="352.7" r="7.17"/><circle cx="899.67" cy="352.7" r="7.17"/><circle cx="930.42" cy="352.7" r="7.17"/><circle cx="961.17" cy="352.7" r="7.17"/><circle cx="991.92" cy="352.7" r="7.17"/><circle cx="669.05" cy="373.2" r="7.17"/><circle cx="699.8" cy="373.2" r="7.17"/><circle cx="730.55" cy="373.2" r="7.17"/><circle cx="761.3" cy="373.2" r="7.17"/><circle cx="792.05" cy="373.2" r="7.17"/><circle cx="822.8" cy="373.2" r="7.17"/><circle cx="853.55" cy="373.2" r="7.17"/><circle cx="884.3" cy="373.2" r="7.17"/><circle cx="915.05" cy="373.2" r="7.17"/><circle cx="945.8" cy="373.2" r="7.17"/><circle cx="976.55" cy="373.2" r="7.17"/><circle cx="1007.3" cy="373.2" r="7.17"/><circle cx="684.42" cy="393.7" r="7.17"/><circle cx="715.17" cy="393.7" r="7.17"/><circle cx="745.92" cy="393.7" r="7.17"/><circle cx="776.67" cy="393.7" r="7.17"/><circle cx="807.42" cy="393.7" r="7.17"/><circle cx="838.17" cy="393.7" r="7.17"/><circle cx="868.92" cy="393.7" r="7.17"/><circle cx="899.67" cy="393.7" r="7.17"/><circle cx="930.42" cy="393.7" r="7.17"/><circle cx="961.17" cy="393.7" r="7.17"/><circle cx="991.92" cy="393.7" r="7.17"/><circle cx="669.05" cy="414.2" r="7.17"/><circle cx="699.8" cy="414.2" r="7.17"/><circle cx="730.55" cy="414.2" r="7.17"/><circle cx="761.3" cy="414.2" r="7.17"/><circle cx="792.05" cy="414.2" r="7.17"/><circle cx="822.8" cy="414.2" r="7.17"/><circle cx="853.55" cy="414.2" r="7.17"/><circle cx="884.3" cy="414.2" r="7.17"/><circle cx="915.05" cy="414.2" r="7.17"/><circle cx="945.8" cy="414.2" r="7.17"/><circle cx="976.55" cy="414.2" r="7.17"/><circle cx="1007.3" cy="414.2" r="7.17"/><circle cx="684.42" cy="434.7" r="7.17"/><circle cx="715.17" cy="434.7" r="7.17"/><circle cx="745.92" cy="434.7" r="7.17"/><circle cx="776.67" cy="434.7" r="7.17"/><circle cx="807.42" cy="434.7" r="7.17"/><circle cx="838.17" cy="434.7" r="7.17"/><circle cx="868.92" cy="434.7" r="7.17"/><circle cx="899.67" cy="434.7" r="7.17"/><circle cx="930.42" cy="434.7" r="7.17"/><circle cx="961.17" cy="434.7" r="7.17"/><circle cx="991.92" cy="434.7" r="7.17"/><circle cx="669.05" cy="455.2" r="7.17"/><circle cx="699.8" cy="455.2" r="7.17"/><circle cx="730.55" cy="455.2" r="7.17"/><circle cx="761.3" cy="455.2" r="7.17"/><circle cx="792.05" cy="455.2" r="7.17"/><circle cx="822.8" cy="455.2" r="7.17"/><circle cx="684.42" cy="475.7" r="7.17"/><circle cx="715.17" cy="475.7" r="7.17"/><circle cx="745.92" cy="475.7" r="7.17"/><circle cx="776.67" cy="475.7" r="7.17"/><circle cx="807.42" cy="475.7" r="7.17"/><circle cx="669.05" cy="496.2" r="7.17"/><circle cx="699.8" cy="496.2" r="7.17"/><circle cx="730.55" cy="496.2" r="7.17"/><circle cx="761.3" cy="496.2" r="7.17"/><circle cx="792.05" cy="496.2" r="7.17"/><circle cx="822.8" cy="496.2" r="7.17"/><circle cx="684.42" cy="516.7" r="7.17"/><circle cx="715.17" cy="516.7" r="7.17"/><circle cx="745.92" cy="516.7" r="7.17"/><circle cx="776.67" cy="516.7" r="7.17"/><circle cx="807.42" cy="516.7" r="7.17"/><circle cx="669.05" cy="537.2" r="7.17"/><circle cx="699.8" cy="537.2" r="7.17"/><circle cx="730.55" cy="537.2" r="7.17"/><circle cx="761.3" cy="537.2" r="7.17"/><circle cx="792.05" cy="537.2" r="7.17"/><circle cx="822.8" cy="537.2" r="7.17"/><circle cx="684.42" cy="557.7" r="7.17"/><circle cx="715.17" cy="557.7" r="7.17"/><circle cx="745.92" cy="557.7" r="7.17"/><circle cx="776.67" cy="557.7" r="7.17"/><circle cx="807.42" cy="557.7" r="7.17"/><circle cx="669.05" cy="578.2" r="7.17"/><circle cx="699.8" cy="578.2" r="7.17"/><circle cx="730.55" cy="578.2" r="7.17"/><circle cx="761.3" cy="578.2" r="7.17"/><circle cx="792.05" cy="578.2" r="7.17"/><circle cx="822.8" cy="578.2" r="7.17"/></g>
<rect x="650.7" y="316" width="379.6" height="74.8" fill="#00009a" fill-opacity="0.5" stroke="#a80000" stroke-width="1.3"/>
<clipPath id="selclip"><rect x="651.4" y="316.7" width="377.9" height="73.1"/></clipPath>
<g clip-path="url(#selclip)" stroke="#a6a6f8" stroke-width="2.15" fill="none"><circle cx="669.05" cy="332.2" r="7.17"/><circle cx="699.8" cy="332.2" r="7.17"/><circle cx="730.55" cy="332.2" r="7.17"/><circle cx="761.3" cy="332.2" r="7.17"/><circle cx="792.05" cy="332.2" r="7.17"/><circle cx="822.8" cy="332.2" r="7.17"/><circle cx="853.55" cy="332.2" r="7.17"/><circle cx="884.3" cy="332.2" r="7.17"/><circle cx="915.05" cy="332.2" r="7.17"/><circle cx="945.8" cy="332.2" r="7.17"/><circle cx="976.55" cy="332.2" r="7.17"/><circle cx="1007.3" cy="332.2" r="7.17"/><circle cx="684.42" cy="352.7" r="7.17"/><circle cx="715.17" cy="352.7" r="7.17"/><circle cx="745.92" cy="352.7" r="7.17"/><circle cx="776.67" cy="352.7" r="7.17"/><circle cx="807.42" cy="352.7" r="7.17"/><circle cx="838.17" cy="352.7" r="7.17"/><circle cx="868.92" cy="352.7" r="7.17"/><circle cx="899.67" cy="352.7" r="7.17"/><circle cx="930.42" cy="352.7" r="7.17"/><circle cx="961.17" cy="352.7" r="7.17"/><circle cx="991.92" cy="352.7" r="7.17"/><circle cx="669.05" cy="373.2" r="7.17"/><circle cx="699.8" cy="373.2" r="7.17"/><circle cx="730.55" cy="373.2" r="7.17"/><circle cx="761.3" cy="373.2" r="7.17"/><circle cx="792.05" cy="373.2" r="7.17"/><circle cx="822.8" cy="373.2" r="7.17"/><circle cx="853.55" cy="373.2" r="7.17"/><circle cx="884.3" cy="373.2" r="7.17"/><circle cx="915.05" cy="373.2" r="7.17"/><circle cx="945.8" cy="373.2" r="7.17"/><circle cx="976.55" cy="373.2" r="7.17"/><circle cx="1007.3" cy="373.2" r="7.17"/><circle cx="684.42" cy="393.7" r="7.17"/><circle cx="715.17" cy="393.7" r="7.17"/><circle cx="745.92" cy="393.7" r="7.17"/><circle cx="776.67" cy="393.7" r="7.17"/><circle cx="807.42" cy="393.7" r="7.17"/><circle cx="838.17" cy="393.7" r="7.17"/><circle cx="868.92" cy="393.7" r="7.17"/><circle cx="899.67" cy="393.7" r="7.17"/><circle cx="930.42" cy="393.7" r="7.17"/><circle cx="961.17" cy="393.7" r="7.17"/><circle cx="991.92" cy="393.7" r="7.17"/></g>
<line x1="657" y1="291.3" x2="990" y2="291.3" stroke="#b40000" stroke-width="1.25"/>
<path d="M986.5 285.8 L1008 291.3 L986.5 296.8 Z" fill="#ff0000"/>
<line x1="858" y1="521.7" x2="1018" y2="521.7" stroke="#6c261e" stroke-width="1.4" stroke-dasharray="16.3 7.2 1.5 7.2" stroke-dashoffset="24.75"/>
<line x1="937.7" y1="455" x2="937.7" y2="578" stroke="#6c261e" stroke-width="1.4" stroke-dasharray="16.3 7.2 1.5 7.2" stroke-dashoffset="11.05"/>
<rect x="858" y="465" width="160" height="113" rx="21" stroke="#fff" stroke-width="2.75" fill="none"/>
<rect x="932.7" y="440" width="10" height="10" fill="#c8102e" stroke="#555" stroke-width="0.8"/>
<rect x="1025" y="516.7" width="10" height="10" fill="#c8102e" stroke="#555" stroke-width="0.8"/>
<rect x="840.5" y="516.7" width="10" height="10" fill="#0a14b4" stroke="#555" stroke-width="0.8"/>
<rect x="932.7" y="586" width="10" height="10" fill="#0a14b4" stroke="#555" stroke-width="0.8"/>
<defs><radialGradient id="halo" cx="0.5" cy="0.5" r="0.5"><stop offset="0" stop-color="#7b94a3" stop-opacity="0"/><stop offset="0.74" stop-color="#7b94a3" stop-opacity="0"/><stop offset="0.82" stop-color="#6f8898" stop-opacity="0.16"/><stop offset="0.88" stop-color="#728b9b" stop-opacity="0.42"/><stop offset="0.93" stop-color="#7d96a6" stop-opacity="0.7"/><stop offset="0.97" stop-color="#768f9f" stop-opacity="0.66"/><stop offset="0.995" stop-color="#5f7785" stop-opacity="0.5"/><stop offset="1" stop-color="#5f7785" stop-opacity="0"/></radialGradient></defs>
<circle cx="1030" cy="391" r="39" fill="url(#halo)"/>
<path d="M1030.8 393 L1030.8 413.6 L1035.6 409.2 L1040.8 419.6 L1044 418.2 L1039 407.8 L1044.8 407.8 Z" fill="#fff" stroke="#fff" stroke-width="2.8" stroke-linejoin="miter"/>
<path d="M1030.8 393 L1030.8 413.6 L1035.6 409.2 L1040.8 419.6 L1044 418.2 L1039 407.8 L1044.8 407.8 Z" fill="#fff" stroke="#222" stroke-width="0.9" stroke-linejoin="miter"/>
</g>
</svg>
<svg id="icons" class="ov" width="1500" height="844" viewBox="0 0 1500 844">
<defs>
<linearGradient id="gPaper" x1="0" y1="0" x2="1" y2="1"><stop offset="0" stop-color="#ffffff"/><stop offset="1" stop-color="#e6e6e6"/></linearGradient>
<radialGradient id="gGlow"><stop offset="0" stop-color="#ffffff"/><stop offset="0.2" stop-color="#fbf9a0"/><stop offset="0.5" stop-color="#ebe52a"/><stop offset="0.8" stop-color="#dcd410" stop-opacity="0.8"/><stop offset="1" stop-color="#d8d000" stop-opacity="0"/></radialGradient>
<linearGradient id="gFolder" x1="0" y1="0" x2="0" y2="1"><stop offset="0" stop-color="#85add8"/><stop offset="1" stop-color="#5b8cc8"/></linearGradient>
<linearGradient id="gFloppy" x1="0" y1="0" x2="1" y2="1"><stop offset="0" stop-color="#7aa0ff"/><stop offset="0.5" stop-color="#3f68ee"/><stop offset="1" stop-color="#2d52de"/></linearGradient>
<linearGradient id="gLabel" x1="0" y1="0" x2="1" y2="1"><stop offset="0" stop-color="#ffffff"/><stop offset="0.5" stop-color="#dfe6ff"/><stop offset="1" stop-color="#f4f6ff"/></linearGradient>
<linearGradient id="gShut" x1="0" y1="0" x2="1" y2="0"><stop offset="0" stop-color="#c9c9d2"/><stop offset="1" stop-color="#f1f1f4"/></linearGradient>
<linearGradient id="gPencilO" x1="0" y1="0" x2="1" y2="1"><stop offset="0" stop-color="#ffc04a"/><stop offset="1" stop-color="#e07800"/></linearGradient>
<linearGradient id="gPrinter" x1="0" y1="0" x2="0" y2="1"><stop offset="0" stop-color="#f4f4f4"/><stop offset="1" stop-color="#bdbdbd"/></linearGradient>
<linearGradient id="gUndo" x1="0" y1="0" x2="0" y2="1"><stop offset="0" stop-color="#7cc86a"/><stop offset="1" stop-color="#22963a"/></linearGradient>
<linearGradient id="gRedo" x1="0" y1="0" x2="0" y2="1"><stop offset="0" stop-color="#c4e2c0"/><stop offset="1" stop-color="#84c494"/></linearGradient>
<linearGradient id="gLens" x1="0" y1="0" x2="0" y2="1"><stop offset="0" stop-color="#6d9adf"/><stop offset="0.48" stop-color="#86aee8"/><stop offset="0.5" stop-color="#5d8fdc"/><stop offset="1" stop-color="#8fb8ee"/></linearGradient>
<linearGradient id="gClip" x1="0" y1="0" x2="1" y2="0"><stop offset="0" stop-color="#c98a2a"/><stop offset="1" stop-color="#b5791c"/></linearGradient>
<linearGradient id="gEraser" x1="0" y1="0" x2="1" y2="1"><stop offset="0" stop-color="#e02020"/><stop offset="1" stop-color="#b00000"/></linearGradient>
</defs>
<path d="M27.50 35.50 L27.50 53.00 L31.50 49.30 L34.70 56.50 L37.50 55.30 L34.30 48.30 L39.50 48.30 Z" fill="#fff" stroke="#333" stroke-width="1.1" stroke-linejoin="round"/>
<path d="M31.40 79.20 L31.40 94.08 L34.80 90.93 L37.52 97.05 L39.90 96.03 L37.18 90.08 L41.60 90.08 Z" fill="#fff" stroke="#333" stroke-width="1.0" stroke-linejoin="round"/>
<rect x="101.5" y="58.5" width="24" height="2.2" rx="1" fill="#8a8a8a" opacity="0.7"/>
<rect x="101.5" y="32.5" width="24" height="27" rx="1.2" fill="url(#gPaper)" stroke="#9c9c9c" stroke-width="1"/>
<circle cx="121.7" cy="37.6" r="7.4" fill="url(#gGlow)"/>
<path d="M145 37 L151 35 L153 58 L147 58 Z" fill="#8e8e8e" stroke="#6a6a6a" stroke-width="0.8"/>
<path d="M152 33 L172 32.5 L173.5 48 L150 56 Z" fill="#fafafa" stroke="#8a8a8a" stroke-width="0.8"/>
<path d="M154 36 L170 35.5 M154 38.5 L170.5 38" stroke="#b9b9b9" stroke-width="1.2"/>
<path d="M152 44.5 L175.5 43.3 L172 57.4 L147.5 57.6 Z" fill="url(#gFolder)" stroke="#4a78b4" stroke-width="0.9" stroke-linejoin="round"/>
<rect x="203.4" y="33.3" width="24.6" height="25.2" rx="3" fill="url(#gFloppy)" stroke="#2a2ab4" stroke-width="1.2"/><rect x="207.20000000000002" y="34.2" width="17.5" height="11.3" fill="url(#gLabel)"/><rect x="209.20000000000002" y="48" width="12.5" height="9.6" fill="url(#gShut)"/><rect x="211.0" y="50.3" width="2.2" height="5" fill="#1f3fc8"/>
<rect x="249.4" y="33.3" width="24.6" height="25.2" rx="3" fill="url(#gFloppy)" stroke="#2a2ab4" stroke-width="1.2"/><rect x="253.20000000000002" y="34.2" width="17.5" height="11.3" fill="url(#gLabel)"/><rect x="255.20000000000002" y="48" width="12.5" height="9.6" fill="url(#gShut)"/><rect x="257.0" y="50.3" width="2.2" height="5" fill="#1f3fc8"/>
<g transform="translate(258.6,51.2) rotate(-52)"><path d="M0 0 L5 -2.6 L5 2.6 Z" fill="#f3d9b0" stroke="#7a5a2a" stroke-width="0.5"/><path d="M0 0 L1.8 -0.9 L1.8 0.9 Z" fill="#222"/><rect x="5" y="-2.6" width="15.5" height="5.2" fill="url(#gPencilO)" stroke="#b45a00" stroke-width="0.6"/><rect x="20.5" y="-2.6" width="2" height="5.2" fill="#d8d8d8" stroke="#999" stroke-width="0.4"/><rect x="22.5" y="-2.6" width="2.6" height="5.2" rx="1" fill="#e8502a" stroke="#a83010" stroke-width="0.4"/></g>
<path d="M318 45.6 L318.00 37.50" stroke="#000" stroke-width="5.20" stroke-linecap="round" fill="none"/>
<circle cx="318.00" cy="37.50" r="3.80" fill="#000"/>
<path d="M318 45.6 L323.46 39.75" stroke="#000" stroke-width="5.20" stroke-linecap="round" fill="none"/>
<circle cx="323.46" cy="39.75" r="3.80" fill="#000"/>
<path d="M318 45.6 L312.54 39.75" stroke="#000" stroke-width="5.20" stroke-linecap="round" fill="none"/>
<circle cx="312.54" cy="39.75" r="3.80" fill="#000"/>
<path d="M318 45.6 L326.35 44.72" stroke="#000" stroke-width="5.20" stroke-linecap="round" fill="none"/>
<circle cx="326.35" cy="44.72" r="3.10" fill="#000"/>
<path d="M318 45.6 L309.65 44.72" stroke="#000" stroke-width="5.20" stroke-linecap="round" fill="none"/>
<circle cx="309.65" cy="44.72" r="3.10" fill="#000"/>
<path d="M309 43.8 L327 43.8 Q330 43.8 330 46.8 L330 54.8 Q330 57.8 327 57.8 L309 57.8 Q306 57.8 306 54.8 L306 46.8 Q306 43.8 309 43.8 Z" fill="#000"/>
<path d="M318 45.6 L318.00 37.50" stroke="#ffab24" stroke-width="2.20" stroke-linecap="round" fill="none"/>
<circle cx="318.00" cy="37.50" r="2.30" fill="#ffab24"/>
<path d="M318 45.6 L323.46 39.75" stroke="#ffab24" stroke-width="2.20" stroke-linecap="round" fill="none"/>
<circle cx="323.46" cy="39.75" r="2.30" fill="#ffab24"/>
<path d="M318 45.6 L312.54 39.75" stroke="#ffab24" stroke-width="2.20" stroke-linecap="round" fill="none"/>
<circle cx="312.54" cy="39.75" r="2.30" fill="#ffab24"/>
<path d="M318 45.6 L326.35 44.72" stroke="#ffab24" stroke-width="2.20" stroke-linecap="round" fill="none"/>
<circle cx="326.35" cy="44.72" r="1.60" fill="#ffab24"/>
<path d="M318 45.6 L309.65 44.72" stroke="#ffab24" stroke-width="2.20" stroke-linecap="round" fill="none"/>
<circle cx="309.65" cy="44.72" r="1.60" fill="#ffab24"/>
<path d="M307.6 44.6 L328.4 44.6 L328.4 45.6 Q318 47.2 307.6 45.6 Z" fill="#ffab24"/>
<text x="318.2" y="56.7" text-anchor="middle" font-family="'Liberation Sans',sans-serif" font-weight="bold" font-size="13" fill="#fff" textLength="19.4" lengthAdjust="spacingAndGlyphs">SVG</text>
<rect x="364" y="32.4" width="19.5" height="14" fill="#e9e9e9" stroke="#b5b5b5" stroke-width="0.8"/>
<rect x="372" y="35" width="9" height="8" fill="#d4d4d4"/>
<ellipse cx="374" cy="57.3" rx="13" ry="1.6" fill="#8a8a8a" opacity="0.6"/>
<path d="M363 44.5 L385 44.5 L388 48.5 L388 56 Q388 57.3 386.5 57.3 L361.5 57.3 Q360.2 57.3 360.2 56 L360.2 48.5 Z" fill="url(#gPrinter)" stroke="#a2a2a2" stroke-width="0.8"/>
<rect x="362" y="52.5" width="24" height="3.6" rx="0.8" fill="#f4f4f4" stroke="#b3b3b3" stroke-width="0.5"/>
<path d="M374.5 45.5 L382 52" stroke="#9a9a9a" stroke-width="3.4" stroke-linecap="round"/><path d="M374.5 45.5 L382 52" stroke="#dcdcdc" stroke-width="1.6" stroke-linecap="round"/>
<circle cx="369.7" cy="40.8" r="6.3" fill="#c9dcf6" stroke="#5e8fd8" stroke-width="1.5"/><path d="M365 39.5 A5 5 0 0 1 374.4 39.5 Q369.7 42 365 39.5 Z" fill="#fff" opacity="0.7"/>
<path d="M414.7 37.3 L418.3 42.3 C421.5 37.5 426 33.7 431.3 33.7 C438.5 33.7 443.2 38.5 443 44.5 C442.8 51.5 436 57 427.3 57.6 C426.5 57.3 426.8 56.6 427.5 56.3 C433 55.5 438.2 51 438.3 45 C438.4 41.5 436.5 39.6 433.2 39.8 C429.5 40 426 42.8 422.7 46.5 L428 51.5 L414.8 51.7 Z" fill="url(#gUndo)" stroke="#1a8432" stroke-width="0.9" stroke-linejoin="round"/>
<path transform="translate(903.7,0) scale(-1,1)" d="M414.7 37.3 L418.3 42.3 C421.5 37.5 426 33.7 431.3 33.7 C438.5 33.7 443.2 38.5 443 44.5 C442.8 51.5 436 57 427.3 57.6 C426.5 57.3 426.8 56.6 427.5 56.3 C433 55.5 438.2 51 438.3 45 C438.4 41.5 436.5 39.6 433.2 39.8 C429.5 40 426 42.8 422.7 46.5 L428 51.5 L414.8 51.7 Z" fill="url(#gRedo)" stroke="#7fba8e" stroke-width="0.9" stroke-linejoin="round"/>
<ellipse cx="533" cy="57.2" rx="10" ry="1.3" fill="#9a9a9a" opacity="0.5"/>
<g transform="translate(521.5,54.2) rotate(-45.5)"><rect x="0" y="-4.6" width="27" height="9.2" rx="1" fill="url(#gEraser)" stroke="#8a0000" stroke-width="0.5"/><rect x="5" y="-1.8" width="22" height="3.6" fill="#fff"/><rect x="0" y="-4.6" width="5.2" height="9.2" fill="#fafafa" stroke="#aaa" stroke-width="0.5"/></g>
<path d="M586.8 33 L589.6 31 L590.2 44 L587.2 49 Z" fill="#e2e2e2" stroke="#777" stroke-width="0.7"/>
<path d="M600.2 37.2 L600.6 40.4 L590.4 46.8 L588.6 44.2 Z" fill="#efefef" stroke="#777" stroke-width="0.7"/>
<ellipse cx="579.3" cy="48" rx="5.2" ry="3" transform="rotate(-20 579.3 48)" fill="none" stroke="#e0161c" stroke-width="2.5"/>
<ellipse cx="589.6" cy="54.2" rx="3" ry="5.4" transform="rotate(-6 589.6 54.2)" fill="none" stroke="#e0161c" stroke-width="2.5"/>
<path d="M584.2 46 L588.4 46.8 L588.6 49.4" fill="none" stroke="#e0161c" stroke-width="2.4"/>
<path d="M573.2 57.6 L579.2 57.6 M576.2 54.6 L576.2 60.6" stroke="#000" stroke-width="1"/>
<rect x="618.3" y="30.6" width="20.5" height="25" rx="1" fill="url(#gPaper)" stroke="#b4b4b4" stroke-width="0.8"/>
<path d="M621 39h6M621 42h6M621 45h6M621 48h6" stroke="#c9c9c9" stroke-width="1"/>
<path d="M627.2 36.6 h20.6 v19.6 l-5 5 h-15.600000000000001 Z" fill="url(#gPaper)" stroke="#a8a8a8" stroke-width="0.8"/><path d="M642.8000000000001 61.2 l0 -5 l5 0 Z" fill="#9a9a9a"/>
<path d="M631 43.5h13M631 46.5h13M631 49.5h13M631 52.5h9" stroke="#c4c4c4" stroke-width="1"/>
<path d="M619 56.4 L625 56.4 M622 53.4 L622 59.4" stroke="#000" stroke-width="1"/>
<rect x="665.4" y="33" width="27.4" height="27.6" rx="1.5" fill="url(#gClip)" stroke="#9a6414" stroke-width="0.8"/>
<path d="M668.6 35.6 h21 v18 l-5 5 h-16 Z" fill="url(#gPaper)" stroke="#a8a8a8" stroke-width="0.8"/><path d="M684.6 58.6 l0 -5 l5 0 Z" fill="#9a9a9a"/>
<path d="M672 40.5h14M672 43.5h14M672 46.5h14M672 49.5h10" stroke="#c9c9c9" stroke-width="1"/>
<path d="M673 36.8 L673 33.4 Q673 32.2 674.4 32.2 L676.2 32.2 L676.2 30.8 Q676.2 30 677.2 30 L681 30 Q682 30 682 30.8 L682 32.2 L683.8 32.2 Q685.2 32.2 685.2 33.4 L685.2 36.8 Z" fill="#8f8f86" stroke="#6e6e66" stroke-width="0.6"/>
<g transform="translate(724.2,54.2) rotate(-46)"><path d="M0 0 L5.4 -2.9 L5.4 2.9 Z" fill="#f0d2a4" stroke="#7a5a2a" stroke-width="0.5"/><path d="M0 0 L2 -1 L2 1 Z" fill="#222"/><rect x="5.4" y="-2.9" width="15" height="5.8" fill="#e02810" stroke="#8a4a10" stroke-width="0.7"/><rect x="5.4" y="-1" width="15" height="1.4" fill="#ff7a5a" opacity="0.7"/><rect x="20.4" y="-2.9" width="2" height="5.8" fill="#d8d8d8" stroke="#8a6a4a" stroke-width="0.4"/><rect x="22.4" y="-2.9" width="3.4" height="5.8" rx="1.4" fill="#e23a1a" stroke="#8a4a10" stroke-width="0.6"/></g>
<path d="M723 56.3 L745 56.3" stroke="#ff0000" stroke-width="1.1"/>
<rect x="766" y="36" width="28.2" height="20.8" fill="#00007f" stroke="#2a2a2a" stroke-width="1"/>
<path d="M770 53.4 L790.6 39.4" stroke="#fff" stroke-width="1.2"/><path d="M770 53.6 L790.8 53.6 L790.8 39.8" fill="none" stroke="#e8e8ff" stroke-width="1.2" stroke-dasharray="3 1.6"/>
<path d="M817.2 36.2 A13 13 0 1 1 815.2 53.8" fill="none" stroke="#000" stroke-width="2"/>
<path d="M815.2 53.8 A13 13 0 0 1 817.2 36.2" fill="none" stroke="#000" stroke-width="2" stroke-dasharray="2.6 1.4"/>
<path d="M821 33.8 L830 33.8" stroke="#000" stroke-width="2"/>
<path d="M812.2 59.6 L840.2 32" stroke="#1010ff" stroke-width="1.2"/>
<rect x="869.9" y="32.6" width="2.2" height="2.2" fill="#000"/>
<rect x="869.9" y="40.6" width="2.2" height="2.2" fill="#000"/>
<rect x="869.9" y="48.6" width="2.2" height="2.2" fill="#000"/>
<rect x="869.9" y="56.8" width="2.2" height="2.2" fill="#000"/>
<rect x="877.9" y="32.6" width="2.2" height="2.2" fill="#000"/>
<rect x="877.9" y="40.6" width="2.2" height="2.2" fill="#000"/>
<rect x="877.9" y="48.6" width="2.2" height="2.2" fill="#000"/>
<rect x="877.9" y="56.8" width="2.2" height="2.2" fill="#000"/>
<rect x="885.9" y="32.6" width="2.2" height="2.2" fill="#000"/>
<rect x="885.9" y="40.6" width="2.2" height="2.2" fill="#000"/>
<rect x="885.9" y="48.6" width="2.2" height="2.2" fill="#000"/>
<rect x="885.9" y="56.8" width="2.2" height="2.2" fill="#000"/>
<rect x="893.9" y="32.6" width="2.2" height="2.2" fill="#000"/>
<rect x="893.9" y="40.6" width="2.2" height="2.2" fill="#000"/>
<rect x="893.9" y="48.6" width="2.2" height="2.2" fill="#000"/>
<rect x="893.9" y="56.8" width="2.2" height="2.2" fill="#000"/>
<ellipse cx="942" cy="59" rx="9" ry="1.6" fill="#777" opacity="0.22"/><path d="M945 51.4 L951.6 57.6" stroke="#606060" stroke-width="3.6" stroke-linecap="round"/><path d="M945.6 50.8 L952 56.8" stroke="#8a8a8a" stroke-width="1.2" stroke-linecap="round"/><circle cx="936" cy="42" r="11.2" fill="#ecece4" stroke="#b7b7ad" stroke-width="0.8"/><circle cx="936" cy="42" r="9.2" fill="url(#gLens)" stroke="#4f7fc8" stroke-width="0.6"/><path d="M934.3 36.4h3.4v3.9h3.9v3.4h-3.9v3.9h-3.4v-3.9h-3.9v-3.4h3.9z" fill="#fff" stroke="#3f6fc0" stroke-width="0.5"/>
<ellipse cx="988" cy="59" rx="9" ry="1.6" fill="#777" opacity="0.22"/><path d="M991 51.4 L997.6 57.6" stroke="#606060" stroke-width="3.6" stroke-linecap="round"/><path d="M991.6 50.8 L998 56.8" stroke="#8a8a8a" stroke-width="1.2" stroke-linecap="round"/><circle cx="982" cy="42" r="11.2" fill="#ecece4" stroke="#b7b7ad" stroke-width="0.8"/><circle cx="982" cy="42" r="9.2" fill="url(#gLens)" stroke="#4f7fc8" stroke-width="0.6"/><rect x="976.4" y="40.4" width="11.2" height="3.2" fill="#fff" stroke="#3f6fc0" stroke-width="0.5"/>
<ellipse cx="1034" cy="59" rx="9" ry="1.6" fill="#777" opacity="0.22"/><path d="M1037 51.4 L1043.6 57.6" stroke="#606060" stroke-width="3.6" stroke-linecap="round"/><path d="M1037.6 50.8 L1044 56.8" stroke="#8a8a8a" stroke-width="1.2" stroke-linecap="round"/><circle cx="1028" cy="42" r="11.2" fill="#ecece4" stroke="#b7b7ad" stroke-width="0.8"/><circle cx="1028" cy="42" r="9.2" fill="url(#gLens)" stroke="#4f7fc8" stroke-width="0.6"/><rect x="1024.4" y="38.4" width="7.2" height="7.2" fill="#a9c6f2" opacity="0.8"/><g fill="none" stroke="#fff" stroke-width="2.3"><path d="M1026.2 36.8 L1022.8 36.8 L1022.8 40.2"/><path d="M1026.2 47.2 L1022.8 47.2 L1022.8 43.8"/><path d="M1029.8 36.8 L1033.2 36.8 L1033.2 40.2"/><path d="M1029.8 47.2 L1033.2 47.2 L1033.2 43.8"/></g>
<ellipse cx="1080" cy="59" rx="9" ry="1.6" fill="#777" opacity="0.22"/><path d="M1083 51.4 L1089.6 57.6" stroke="#606060" stroke-width="3.6" stroke-linecap="round"/><path d="M1083.6 50.8 L1090 56.8" stroke="#8a8a8a" stroke-width="1.2" stroke-linecap="round"/><circle cx="1074" cy="42" r="11.2" fill="#ecece4" stroke="#b7b7ad" stroke-width="0.8"/><circle cx="1074" cy="42" r="9.2" fill="url(#gLens)" stroke="#4f7fc8" stroke-width="0.6"/><rect x="1070.4" y="38.4" width="7.2" height="7.2" fill="#a9c6f2" opacity="0.9"/><g fill="none" stroke="#ff0000" stroke-width="2.3"><path d="M1072.2 36.8 L1068.8 36.8 L1068.8 40.2"/><path d="M1072.2 47.2 L1068.8 47.2 L1068.8 43.8"/><path d="M1075.8 36.8 L1079.2 36.8 L1079.2 40.2"/><path d="M1075.8 47.2 L1079.2 47.2 L1079.2 43.8"/></g>
<ellipse cx="1126.3" cy="59" rx="9" ry="1.6" fill="#777" opacity="0.22"/><path d="M1129.3 51.4 L1135.8999999999999 57.6" stroke="#606060" stroke-width="3.6" stroke-linecap="round"/><path d="M1129.8999999999999 50.8 L1136.3 56.8" stroke="#8a8a8a" stroke-width="1.2" stroke-linecap="round"/><circle cx="1120.3" cy="42" r="11.2" fill="#ecece4" stroke="#b7b7ad" stroke-width="0.8"/><circle cx="1120.3" cy="42" r="9.2" fill="url(#gLens)" stroke="#4f7fc8" stroke-width="0.6"/><path d="M1112.8 42 L1119.4 36.4 L1119.4 39.7 L1127.4 39.7 L1127.4 44.3 L1119.4 44.3 L1119.4 47.6 Z" fill="#fff" stroke="#3f6fc0" stroke-width="0.5"/>
<rect x="1154.4" y="30.4" width="27.6" height="18.2" rx="1" fill="#fff" stroke="#6d9adf" stroke-width="1"/>
<ellipse cx="1175" cy="61.8" rx="9" ry="1.6" fill="#777" opacity="0.22"/><path d="M1178 54.199999999999996 L1184.6 60.4" stroke="#606060" stroke-width="3.6" stroke-linecap="round"/><path d="M1178.6 53.599999999999994 L1185 59.599999999999994" stroke="#8a8a8a" stroke-width="1.2" stroke-linecap="round"/><circle cx="1169" cy="44.8" r="9.8" fill="#ecece4" stroke="#b7b7ad" stroke-width="0.8"/><circle cx="1169" cy="44.8" r="8" fill="url(#gLens)" stroke="#4f7fc8" stroke-width="0.6"/>
<ellipse cx="1219.5" cy="60.5" rx="9" ry="1.6" fill="#777" opacity="0.22"/><path d="M1222.5 52.9 L1229.1 59.1" stroke="#606060" stroke-width="3.6" stroke-linecap="round"/><path d="M1223.1 52.3 L1229.5 58.3" stroke="#8a8a8a" stroke-width="1.2" stroke-linecap="round"/><circle cx="1213.5" cy="43.5" r="11.4" fill="#ecece4" stroke="#b7b7ad" stroke-width="0.8"/><circle cx="1213.5" cy="43.5" r="10" fill="url(#gLens)" stroke="#4f7fc8" stroke-width="0.6"/>
<path transform="translate(1213.5,43) rotate(0)" d="M0 -13 L3 -9.2 L1.2 -9.2 L1.2 -1.2 L-1.2 -1.2 L-1.2 -9.2 L-3 -9.2 Z" fill="#fff" stroke="#5b8bd4" stroke-width="0.5"/>
<path transform="translate(1213.5,43) rotate(90)" d="M0 -13 L3 -9.2 L1.2 -9.2 L1.2 -1.2 L-1.2 -1.2 L-1.2 -9.2 L-3 -9.2 Z" fill="#fff" stroke="#5b8bd4" stroke-width="0.5"/>
<path transform="translate(1213.5,43) rotate(180)" d="M0 -13 L3 -9.2 L1.2 -9.2 L1.2 -1.2 L-1.2 -1.2 L-1.2 -9.2 L-3 -9.2 Z" fill="#fff" stroke="#5b8bd4" stroke-width="0.5"/>
<path transform="translate(1213.5,43) rotate(270)" d="M0 -13 L3 -9.2 L1.2 -9.2 L1.2 -1.2 L-1.2 -1.2 L-1.2 -9.2 L-3 -9.2 Z" fill="#fff" stroke="#5b8bd4" stroke-width="0.5"/>
<rect x="1212.1" y="41.6" width="2.8" height="2.8" fill="#fff"/>
<path d="M8.2 131.6 h6.4 M11.4 128.4 v6.4" stroke="#000" stroke-width="1"/>
<path d="M22.1 140.4 h6.4 M25.3 137.20000000000002 v6.4" stroke="#000" stroke-width="1"/>
<path d="M9.0 146.8 h6.4 M12.2 143.60000000000002 v6.4" stroke="#000" stroke-width="1"/>
<path d="M31.0 147.3 L31.0 152.0 L26.3 152.0 Z" fill="#000"/>
<path d="M41.6 144.6 L65 133.8" fill="none" stroke="#1e1e1e" stroke-width="1.1"/>
<path d="M66.0 147.3 L66.0 152.0 L61.3 152.0 Z" fill="#000"/>
<path d="M7.8 183.4 C8.4 172.5 16 164.5 27.4 163.6" fill="none" stroke="#1e1e1e" stroke-width="1.1"/>
<path d="M31.0 182.3 L31.0 187.0 L26.3 187.0 Z" fill="#000"/>
<circle cx="52.6" cy="173.4" r="10" fill="none" stroke="#1e1e1e" stroke-width="1.1"/>
<path d="M66.0 182.3 L66.0 187.0 L61.3 187.0 Z" fill="#000"/>
<ellipse cx="17.8" cy="208.6" rx="14" ry="5.6" transform="rotate(-44 17.8 208.6)" fill="none" stroke="#1e1e1e" stroke-width="1.1"/>
<path d="M31.0 217.3 L31.0 222.0 L26.3 222.0 Z" fill="#000"/>
<path d="M41.8 201.4 C43 212 46 218.4 49 218 C53 217.4 57 201.6 60.6 200 C63.4 199 65.6 208.4 63.6 211 C60.6 214.6 48 198 41.8 201.4 Z" fill="none" stroke="#1e1e1e" stroke-width="1.1"/>
<path d="M66.0 217.3 L66.0 222.0 L61.3 222.0 Z" fill="#000"/>
<path d="M13.4 238.8 C7.4 239.4 6.6 247.8 13.2 248.2 L27.6 248.2" fill="none" stroke="#1e1e1e" stroke-width="1.1"/>
<path d="M31.0 252.3 L31.0 257.0 L26.3 257.0 Z" fill="#000"/>
<path d="M40.4 238 L44 232 L51 232 L54.4 238 L51 244 L44 244 Z" fill="none" stroke="#1e1e1e" stroke-width="1.1"/>
<path d="M55.4 245.4 L60.6 236.4 L65.6 245.4 Z" fill="none" stroke="#1e1e1e" stroke-width="1.1"/>
<rect x="41.2" y="248.8" width="14.4" height="6.4" fill="none" stroke="#1e1e1e" stroke-width="1.1"/>
<path d="M66.0 252.3 L66.0 257.0 L61.3 257.0 Z" fill="#000"/>
<defs><pattern id="hat" width="2.2" height="2.2" patternUnits="userSpaceOnUse" patternTransform="rotate(-45)"><rect width="2.2" height="0.7" fill="#555"/></pattern></defs>
<path d="M7.4 279 L13.6 272.6 L28.4 272.6 L28.4 286 L7.4 286 Z" fill="url(#hat)" stroke="#1e1e1e" stroke-width="1.1"/>
<circle cx="20.6" cy="279.8" r="3" fill="#f0f0f0" stroke="#1e1e1e" stroke-width="1"/>
<path d="M31.0 287.3 L31.0 292.0 L26.3 292.0 Z" fill="#000"/>
<text x="18.2" y="331.8" text-anchor="middle" font-family="'Liberation Serif',serif" font-size="29.5" fill="#111">A</text>
<path d="M43.6 313.8 V330 M62 313.8 V330 M43.6 316 H62" fill="none" stroke="#1e1e1e" stroke-width="1.1"/>
<path d="M43.9 316 L47.6 314.4 L47.6 317.6 Z M61.7 316 L58 314.4 L58 317.6 Z" fill="#000"/>
<path d="M66.0 330.3 L66.0 335.0 L61.3 335.0 Z" fill="#000"/>
<rect x="6.8" y="348.2" width="22" height="17.2" fill="#fff" stroke="#111" stroke-width="1.2"/>
<path d="M10 362.6 L10 358.6 L13.2 355.4 L16.2 358.4 L20.6 354 L26 359.4 L26 362.6 Z" fill="#000"/><circle cx="24.4" cy="352.4" r="1.8" fill="#000"/>
<path d="M5.6 393.4 L5.6 412.6 L24.4 412.6 Z" fill="#f4f4f4" stroke="#111" stroke-width="1.1"/><path d="M9.6 403 L9.6 408.6 L15.2 408.6 Z" fill="none" stroke="#111" stroke-width="1"/>
<g transform="translate(20.4,398.4) rotate(-136)"><path d="M0 0 L3.4 -2 L3.4 2 Z" fill="#f0d2a4" stroke="#7a5a2a" stroke-width="0.4"/><path d="M0 0 L1.3 -0.7 L1.3 0.7 Z" fill="#222"/><rect x="3.4" y="-2" width="8.6" height="4" fill="#e02810" stroke="#8a2a10" stroke-width="0.5"/><rect x="12" y="-2" width="2.6" height="4" rx="1" fill="#e6452a" stroke="#8a2a10" stroke-width="0.5"/></g>
<path d="M26.2 387.4 L26.2 391 M26.2 390 L23.4 404.4 M26.2 390 L29 404.4" fill="none" stroke="#111" stroke-width="1"/><circle cx="26.2" cy="390.2" r="1.1" fill="#fff" stroke="#111" stroke-width="0.7"/>
<path d="M31.0 408.3 L31.0 413.0 L26.3 413.0 Z" fill="#000"/>
<rect x="41.2" y="396" width="23.6" height="7.6" rx="1" fill="#fbfbfb" stroke="#777" stroke-width="1"/>
<path d="M43.2 396.5 v3.4 M45.2 396.5 v1.8 M47.1 396.5 v1.8 M49.1 396.5 v1.8 M51.0 396.5 v1.8 M53.0 396.5 v3.4 M54.9 396.5 v1.8 M56.9 396.5 v1.8 M58.8 396.5 v1.8 M60.8 396.5 v1.8 M62.7 396.5 v3.4" stroke="#333" stroke-width="0.7"/>
<rect x="7.4" y="425.6" width="17.4" height="12.4" fill="#fdf0c4" stroke="#222" stroke-width="1"/>
<circle cx="22" cy="437" r="6.8" fill="#fdf0c4" stroke="#222" stroke-width="1"/>
<path d="M16 438 L24.8 438 L24.8 431" fill="none" stroke="#222" stroke-width="1"/>
<circle cx="7.8" cy="438" r="1.6" fill="#ff2020"/>
<path d="M41.6 434 L59.2 424" stroke="#ff2a2a" stroke-width="1.3"/>
<path d="M51.6 429.6 L51.6 441.4 L54.4 438.8 L56.6 443.8 L58.6 442.8 L56.4 438 L60 438 Z" fill="#f4f4f4" stroke="#8a8a8a" stroke-width="0.9" stroke-linejoin="round"/>
<path d="M66.0 443.3 L66.0 448.0 L61.3 448.0 Z" fill="#000"/>
<path d="M7.6 474 L19.6 467.4 L28.6 473 L16 480 Z M7.6 474 L7.6 482.2 L16 488.6 L28.6 481.6 L28.6 473 M16 480 L16 488.6" fill="none" stroke="#1e1e1e" stroke-width="1.1" stroke-linejoin="round"/>
<path d="M31.0 486.3 L31.0 491.0 L26.3 491.0 Z" fill="#000"/>
<rect x="1463" y="127" width="27.6" height="27.6" fill="#fff" stroke="#2a2a2a" stroke-width="0.9"/><rect x="1463" y="127" width="27.6" height="3.6" fill="#000"/><rect x="1463.8" y="127.6" width="2.6" height="2.6" fill="#fff"/>
<rect x="1463" y="174" width="27.6" height="27.6" fill="#fff" stroke="#2a2a2a" stroke-width="0.9"/><rect x="1463" y="174" width="27.6" height="3.6" fill="#000"/><rect x="1463.8" y="174.6" width="2.6" height="2.6" fill="#fff"/>
<rect x="1463" y="220" width="27.6" height="27.6" fill="#fff" stroke="#2a2a2a" stroke-width="0.9"/><rect x="1463" y="220" width="27.6" height="3.6" fill="#000"/><rect x="1463.8" y="220.6" width="2.6" height="2.6" fill="#fff"/>
<rect x="1463" y="276" width="27.6" height="27.6" fill="#fff" stroke="#2a2a2a" stroke-width="0.9"/><rect x="1463" y="276" width="27.6" height="3.6" fill="#000"/><rect x="1463.8" y="276.6" width="2.6" height="2.6" fill="#fff"/>
<rect x="1463" y="322" width="27.6" height="27.6" fill="#fff" stroke="#2a2a2a" stroke-width="0.9"/><rect x="1463" y="322" width="27.6" height="3.6" fill="#000"/><rect x="1463.8" y="322.6" width="2.6" height="2.6" fill="#fff"/>
<rect x="1463" y="368" width="27.6" height="27.6" fill="#fff" stroke="#2a2a2a" stroke-width="0.9"/><rect x="1463" y="368" width="27.6" height="3.6" fill="#000"/><rect x="1463.8" y="368.6" width="2.6" height="2.6" fill="#fff"/>
<rect x="1463" y="424" width="27.6" height="27.6" fill="#fff" stroke="#2a2a2a" stroke-width="0.9"/><rect x="1463" y="424" width="27.6" height="3.6" fill="#000"/><rect x="1463.8" y="424.6" width="2.6" height="2.6" fill="#fff"/>
<rect x="1463" y="471" width="27.6" height="27.6" fill="#fff" stroke="#2a2a2a" stroke-width="0.9"/><rect x="1463" y="471" width="27.6" height="3.6" fill="#000"/><rect x="1463.8" y="471.6" width="2.6" height="2.6" fill="#fff"/>
<path d="M1470.5 142 L1479 137 L1479 147 L1470.5 152 Z" fill="#ddd" stroke="#444" stroke-width="0.6"/>
<path d="M1472.5 141 L1481 136 L1481 146 L1472.5 151 Z" fill="#eee" stroke="#444" stroke-width="0.6"/>
<path d="M1474.5 140 L1483.5 135 L1483.5 145 L1474.5 150 Z" fill="#fff" stroke="#444" stroke-width="0.6"/>
<path d="M1476.5 146.6 L1481.6 138.6 L1481.6 144 Z" fill="none" stroke="#ff3030" stroke-width="0.7"/>
<rect x="1470" y="185" width="10.4" height="7.4" fill="#fdf0c4" stroke="#444" stroke-width="0.7"/><circle cx="1479" cy="191.6" r="4.4" fill="#fdf0c4" stroke="#444" stroke-width="0.7"/><path d="M1475 192.4 L1480.4 192.4 L1480.4 187.4" fill="none" stroke="#444" stroke-width="0.6"/>
<rect x="1468.6" y="230.4" width="16.6" height="10.8" rx="2" fill="#f4f4f2" stroke="#c4d4ec" stroke-width="1"/>
<rect x="1466.6" y="284.6" width="3.6" height="3" fill="#000"/><rect x="1473" y="284.6" width="14" height="3" fill="#fff" stroke="#333" stroke-width="0.6"/>
<rect x="1466.6" y="290.6" width="3.6" height="3" fill="#000"/><rect x="1473" y="290.6" width="14" height="3" fill="#fff" stroke="#333" stroke-width="0.6"/>
<rect x="1466.6" y="296.6" width="3.6" height="3" fill="#000"/><rect x="1473" y="296.6" width="14" height="3" fill="#fff" stroke="#333" stroke-width="0.6"/>
<path d="M1469.6 331.6 Q1477 329 1484.4 331.6 L1479 339 L1479 344.8 L1475.4 343 L1475.4 339 Z" fill="#9a9a9a" stroke="#444" stroke-width="0.7"/><ellipse cx="1477" cy="331.8" rx="7.4" ry="1.7" fill="#c9c9c9" stroke="#444" stroke-width="0.6"/>
<path d="M1469 377 L1473.4 378.6 L1473.4 389.4 L1469 391 Z" fill="#fff" stroke="#333" stroke-width="0.7"/><rect x="1473.4" y="380.2" width="11.6" height="7.6" rx="1" fill="#8e8e8e" stroke="#555" stroke-width="0.6"/><path d="M1467.6 384 H1487" stroke="#ff9a9a" stroke-width="0.6" stroke-dasharray="2.4 1"/>
<g stroke="#666" stroke-width="0.7"><path d="M1465.6 432.6h9 M1465.6 436h7 M1465.6 439.4h10.4 M1465.6 442.8h10"/></g><path d="M1463 446.6 H1490.6" stroke="#333" stroke-width="0.7"/>
<text x="1472" y="451" font-family="'Liberation Sans',sans-serif" font-size="3.6" fill="#333">command</text>
<rect x="1470.6" y="480.4" width="12.8" height="14" rx="1" fill="#c98a2a" stroke="#9a6414" stroke-width="0.5"/><rect x="1472" y="481.8" width="10" height="11.4" fill="#f4f4f4"/><rect x="1474.4" y="479.2" width="5.2" height="2.6" rx="0.6" fill="#8a8a80"/><path d="M1473.4 485h7M1473.4 487.2h7M1473.4 489.4h5" stroke="#c4c4c4" stroke-width="0.7"/><path d="M1482 493.2 v-3 h-3 Z" fill="#9ab"/>
<circle cx="1164" cy="118" r="7" fill="#6f6f6f"/><path d="M1161.3 115.3 L1166.7 120.7 M1166.7 115.3 L1161.3 120.7" stroke="#fff" stroke-width="1.9" stroke-linecap="round"/>
<circle cx="1182" cy="118" r="7" fill="#6f6f6f"/><rect x="1180.4" y="114.4" width="5.6" height="4.6" fill="none" stroke="#fff" stroke-width="1"/><rect x="1178" y="117" width="5.6" height="4.6" fill="#6f6f6f" stroke="#fff" stroke-width="1"/>
<g opacity="1"><path d="M1177.2 142.79999999999998 C1180.8 136.2 1188.8 136.2 1192.3999999999999 143.2 C1188.8 148.2 1180.8 148.2 1177.2 142.79999999999998 Z" fill="#000"/><path d="M1179.6 143.79999999999998 C1182.2 140.4 1187.6 140.4 1190.2 143.79999999999998 C1187.6 146.79999999999998 1182.2 146.79999999999998 1179.6 143.79999999999998 Z" fill="#fff"/><circle cx="1184.8" cy="143.0" r="2.7" fill="#000"/><circle cx="1183.8999999999999" cy="142.1" r="0.8" fill="#fff"/></g>
<g opacity="1"><path d="M1237.2 142.79999999999998 C1240.8 136.2 1248.8 136.2 1252.3999999999999 143.2 C1248.8 148.2 1240.8 148.2 1237.2 142.79999999999998 Z" fill="#9a9a9a"/><path d="M1239.6 143.79999999999998 C1242.2 140.4 1247.6 140.4 1250.2 143.79999999999998 C1247.6 146.79999999999998 1242.2 146.79999999999998 1239.6 143.79999999999998 Z" fill="#fff"/><circle cx="1244.8" cy="143.0" r="2.7" fill="#9a9a9a"/><circle cx="1243.8999999999999" cy="142.1" r="0.8" fill="#fff"/></g>
<path d="M1303.5 137.5h3v4h4v3h-4v4h-3v-4h-4v-3h4z" fill="#f00000" stroke="#a00000" stroke-width="0.5"/>
<rect x="1359.2" y="141.6" width="11.4" height="2.9" fill="#f00000" stroke="#a00000" stroke-width="0.5"/>
<g transform="translate(1418,149.8) rotate(-44.5)"><path d="M0 0 L3.6 -1.7 L3.6 1.7 Z" fill="#e8c890"/><path d="M0 0 L1.3 -0.6 L1.3 0.6 Z" fill="#333"/><rect x="3.6" y="-1.7" width="12.9" height="3.4" fill="#f0a830"/><rect x="3.6" y="-1.7" width="12.9" height="1.2" fill="#ffd070"/><rect x="3.6" y="0.7" width="12.9" height="1" fill="#b87818"/><rect x="16.5" y="-1.7" width="3" height="3.4" rx="0.8" fill="#e83020"/></g>
<g transform="translate(1394.4,193.3) rotate(-44.5)"><path d="M0 0 L3.6 -1.7 L3.6 1.7 Z" fill="#e8c890"/><path d="M0 0 L1.3 -0.6 L1.3 0.6 Z" fill="#333"/><rect x="3.6" y="-1.7" width="12.000000000000002" height="3.4" fill="#f0a830"/><rect x="3.6" y="-1.7" width="12.000000000000002" height="1.2" fill="#ffd070"/><rect x="3.6" y="0.7" width="12.000000000000002" height="1" fill="#b87818"/><rect x="15.600000000000001" y="-1.7" width="3" height="3.4" rx="0.8" fill="#e83020"/></g>
<g opacity="1"><path d="M1415.3000000000002 167.2 C1418.9 160.6 1426.9 160.6 1430.5 167.6 C1426.9 172.6 1418.9 172.6 1415.3000000000002 167.2 Z" fill="#000"/><path d="M1417.7 168.2 C1420.3000000000002 164.8 1425.7 164.8 1428.3000000000002 168.2 C1425.7 171.2 1420.3000000000002 171.2 1417.7 168.2 Z" fill="#fff"/><circle cx="1422.9" cy="167.4" r="2.7" fill="#000"/><circle cx="1422.0" cy="166.5" r="0.8" fill="#fff"/></g>
<path d="M1442.0 166.8 v-3.4 a3.1 3.1 0 0 1 6.2 0 v3.4" fill="none" stroke="#b9b9b9" stroke-width="1.3"/><rect x="1440.1999999999998" y="166.60000000000002" width="9.8" height="7" fill="#b6b6b6"/>
<g opacity="1"><path d="M1415.3000000000002 187.2 C1418.9 180.6 1426.9 180.6 1430.5 187.6 C1426.9 192.6 1418.9 192.6 1415.3000000000002 187.2 Z" fill="#000"/><path d="M1417.7 188.2 C1420.3000000000002 184.8 1425.7 184.8 1428.3000000000002 188.2 C1425.7 191.2 1420.3000000000002 191.2 1417.7 188.2 Z" fill="#fff"/><circle cx="1422.9" cy="187.4" r="2.7" fill="#000"/><circle cx="1422.0" cy="186.5" r="0.8" fill="#fff"/></g>
<path d="M1442.0 186.8 v-3.4 a3.1 3.1 0 0 1 6.2 0 v3.4" fill="none" stroke="#b9b9b9" stroke-width="1.3"/><rect x="1440.1999999999998" y="186.60000000000002" width="9.8" height="7" fill="#b6b6b6"/>
<g opacity="1"><path d="M1415.3000000000002 207.2 C1418.9 200.6 1426.9 200.6 1430.5 207.6 C1426.9 212.6 1418.9 212.6 1415.3000000000002 207.2 Z" fill="#000"/><path d="M1417.7 208.2 C1420.3000000000002 204.8 1425.7 204.8 1428.3000000000002 208.2 C1425.7 211.2 1420.3000000000002 211.2 1417.7 208.2 Z" fill="#fff"/><circle cx="1422.9" cy="207.4" r="2.7" fill="#000"/><circle cx="1422.0" cy="206.5" r="0.8" fill="#fff"/></g>
<path d="M1442.0 206.8 v-3.4 a3.1 3.1 0 0 1 6.2 0 v3.4" fill="none" stroke="#b9b9b9" stroke-width="1.3"/><rect x="1440.1999999999998" y="206.60000000000002" width="9.8" height="7" fill="#b6b6b6"/>
<g opacity="1"><path d="M1415.3000000000002 227.2 C1418.9 220.6 1426.9 220.6 1430.5 227.6 C1426.9 232.6 1418.9 232.6 1415.3000000000002 227.2 Z" fill="#000"/><path d="M1417.7 228.2 C1420.3000000000002 224.8 1425.7 224.8 1428.3000000000002 228.2 C1425.7 231.2 1420.3000000000002 231.2 1417.7 228.2 Z" fill="#fff"/><circle cx="1422.9" cy="227.4" r="2.7" fill="#000"/><circle cx="1422.0" cy="226.5" r="0.8" fill="#fff"/></g>
<path d="M1442.0 226.8 v-3.4 a3.1 3.1 0 0 1 6.2 0 v3.4" fill="none" stroke="#b9b9b9" stroke-width="1.3"/><rect x="1440.1999999999998" y="226.60000000000002" width="9.8" height="7" fill="#b6b6b6"/>
<rect x="717.4" y="806.2" width="17.2" height="29.2" rx="8.6" fill="#fff" stroke="#555" stroke-width="0.9"/>
<path d="M717.4 820 Q726 817.6 734.6 820" fill="none" stroke="#444" stroke-width="1.5"/>
<path d="M726 806.4 V808.4 M726 815.8 V818.6" stroke="#444" stroke-width="1.3"/>
<rect x="724.2" y="808.5" width="3.6" height="7.2" rx="1.7" fill="#fff" stroke="#444" stroke-width="1"/>
<rect x="1133.2" y="780.6" width="13.6" height="9" fill="#f2f2f2" stroke="#333" stroke-width="0.8"/><rect x="1132.8" y="780.2" width="14.4" height="2.8" fill="#000"/><rect x="1143.4" y="781" width="0.9" height="0.9" fill="#aaa"/>
<defs><linearGradient id="gQ" x1="0" y1="0" x2="1" y2="1"><stop offset="0" stop-color="#9fb2dc"/><stop offset="0.5" stop-color="#3a52a0"/><stop offset="1" stop-color="#14287a"/></linearGradient></defs>
<circle cx="102.1" cy="118.7" r="5.6" fill="#f6f6f6" stroke="url(#gQ)" stroke-width="1.9"/>
<path d="M99 119 h4 M101.4 116 v5" stroke="#999" stroke-width="0.6"/><path d="M98.6 120.6 h3.4" stroke="#e06060" stroke-width="0.6"/>
<path d="M102.6 119.4 L107 123.8" stroke="#f59a10" stroke-width="1.9" stroke-linecap="round"/><path d="M102.4 119.2 L103.2 120" stroke="#ffe9a0" stroke-width="1.6" stroke-linecap="round"/><circle cx="107.4" cy="124.3" r="1.1" fill="#e8605a"/>
</svg>
<div id="hscroll"></div><div id="hthumb"></div>
<div id="vscroll"></div><div id="vthumb"></div>
<div id="zoomlbl">1 &lt; 10</div>
<div id="cmdhist"><span><i>Command:</i> new</span></div>
<div id="cmdrow"><span id="cmdlabel">Second corner:</span><div id="cmdinput"></div><div id="cmdbtn"></div></div>
<div id="statusbar">
<span class="st" style="left:2px;top:8px">86.2195,23.2683</span>
<span class="st" style="left:2px;top:28px">@86.2195,23.2683</span>
<div class="abs" style="left:253px;top:4px;width:1px;height:38px;background:#f6f6f6;border-left:1px solid #9a9a9a"></div>
<span class="st" style="left:256px;top:8px">89.3041&lt;15.10°</span>
<span class="st" style="left:256px;top:28px">@89.3041&lt;15.10°</span>
<div class="sdot" style="left:507px;top:20px"></div>
<span class="st" style="left:632px;top:18px">Second corner</span>
<div class="sdot" style="left:941px;top:20px"></div>
<span class="st" style="left:949px;top:13px">Selected entities:</span>
<span class="st" style="left:949px;top:24px">2 Lines on Layer "Center".</span>
<div class="sdot" style="left:1270.5px;top:20px"></div>
</div>
<div id="rightdock"></div>
<div id="lltitle"><span>Layer List</span></div>
<div class="llbtn" style="left:1155px"></div>
<div class="llbtn" style="left:1215px"></div>
<div class="llbtn" style="left:1275px"></div>
<div class="llbtn" style="left:1335px"></div>
<div class="llbtn" style="left:1395px;width:59.5px"></div>
<div id="llbody">
<div class="lrow" style="top:0"><div class="lsw" style="background:#000"></div><span class="lname">0</span></div>
<div class="lrow" style="top:20px"><div class="lsw" style="background:#a0a0a4;border:1px solid #333"></div><span class="lname">Back</span></div>
<div class="lrow" style="top:40px"><div class="lsw" style="background:#ff0000;border:1px solid #800"></div><span class="lname">Center</span></div>
<div class="lrow" style="top:60px"><div class="lsw" style="background:#000"></div><span class="lname">Ventilation</span></div>
</div>
<div id="rtool"></div>
<div class="grip-h" style="left:1461.6px;top:116px;width:26px"></div>
<div class="rsel" style="left:1456.3px;top:120.5px"></div>
<div class="hdots" style="left:1458px;top:261px;width:40px"></div>
<div class="hdots" style="left:1458px;top:409px;width:40px"></div>
<div class="rsel" style="left:1456.3px;top:417.5px"></div>
</div>
</body></html>
